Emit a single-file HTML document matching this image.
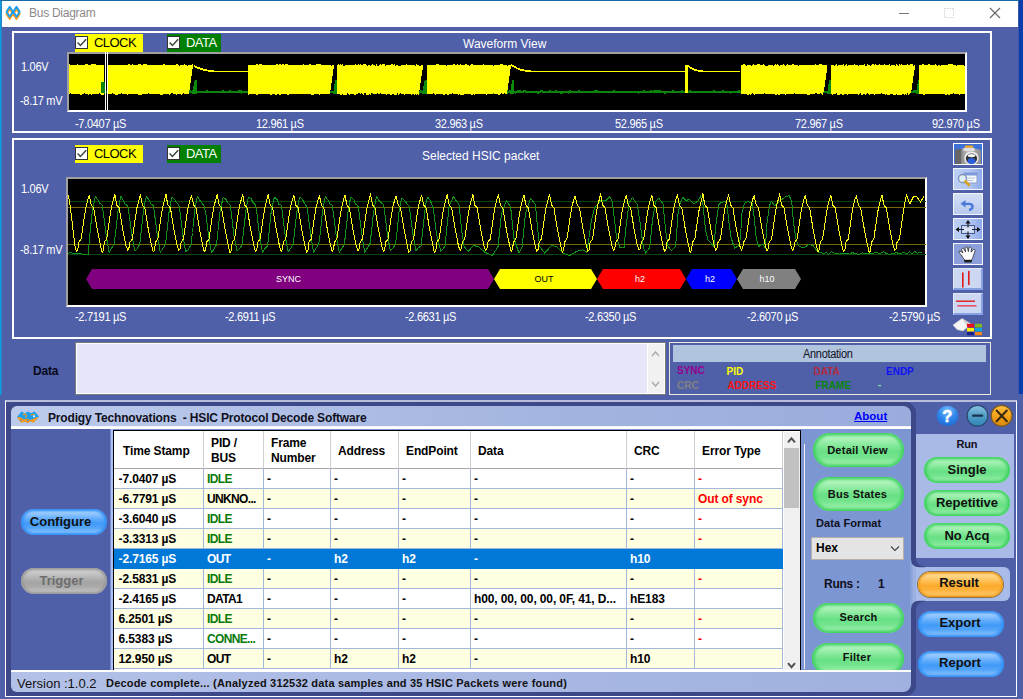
<!DOCTYPE html>
<html>
<head>
<meta charset="utf-8">
<title>Bus Diagram</title>
<style>
*{box-sizing:border-box;margin:0;padding:0}
html,body{width:1023px;height:699px;overflow:hidden}
body{background:#5060a8;font-family:"Liberation Sans",Arial,sans-serif;font-size:12px;color:#fff;position:relative}
.abs{position:absolute}
#win{position:absolute;left:0;top:0;width:1023px;height:395px;background:linear-gradient(to right,#0a9fe0 0,#0a9fe0 1px,#2c80c6 1px,#2c80c6 2px,transparent 2px) no-repeat}
#wtop{position:absolute;left:0;top:0;width:1019px;height:1px;background:#1a6aa6}
#wright{position:absolute;left:1018px;top:0;width:5px;height:394px;background:linear-gradient(to right,#3a58a8 0,#3a58a8 1px,#0b3eaa 1px)}
#titlebar{position:absolute;left:2px;top:1px;width:1016px;height:26px;background:#fff}
#titlebar .t{position:absolute;left:27px;top:5px;font-size:12px;color:#8c8888;letter-spacing:-0.27px}
.panel{position:absolute;border:2px solid #fff;background:#5060a8}
.plot{position:absolute;background:#000;border:1px solid #a0a0a0;border-right-color:#fff;border-bottom-color:#fff}
.chk{position:absolute;height:18px;font-size:13px;line-height:18px;color:#000;letter-spacing:-0.55px}
.chk .box{position:absolute;left:0px;top:2px;width:13px;height:13px;background:#fff;border:1px solid #333}
.chk .lbl{position:absolute;left:19px;top:0}
.lab{position:absolute;font-size:12px;color:#fff;white-space:nowrap;line-height:14px;letter-spacing:-0.33px;transform:scaleX(0.917);transform-origin:0 0}
.tb{position:absolute;left:953px;width:30px;height:22px;background:linear-gradient(to right,#bccff5 0%,#adc3f1 60%,#8eaaea 100%);}
.tb svg{display:block;margin-top:.5px}

.th{position:absolute;top:0;height:38px;background:#fff;border-right:1px solid #d0d0d0;border-bottom:1px solid #a8a8a8;color:#000;font-weight:bold;font-size:12px;padding-left:7px;white-space:nowrap;letter-spacing:-0.12px}
.tr{position:absolute;left:0;width:669px;height:20px}
.td{position:absolute;top:0;height:20px;border-right:1px solid #a3b7da;border-bottom:1px solid #a3b7da;font-weight:bold;font-size:12px;line-height:21px;padding-left:3px;white-space:nowrap;overflow:hidden;letter-spacing:-0.12px}
.pill{position:absolute;border-radius:17px;text-align:center;font-weight:bold;color:#101010;white-space:nowrap;display:flex;align-items:center;justify-content:center}
.pill.green{background:linear-gradient(#a6f0b2 0%,#b6f5c0 12%,#82e898 38%,#68e085 55%,#74e48e 72%,#a0f0ae 92%,#8eeaa0 100%);box-shadow:inset 0 0 3px 2.5px #40d262}
.pill.blue{background:linear-gradient(#7fbcff 0%,#a4d0ff 12%,#5fabfc 38%,#419bf8 55%,#52a4fa 72%,#8cc4ff 92%,#6cb2fc 100%);box-shadow:inset 0 0 2.5px 2px #2f8ef6}
.pill.orange{background:linear-gradient(#ffcf7a 0%,#ffd98e 12%,#ffbe52 38%,#fbab2c 55%,#fcb23c 72%,#ffc868 92%,#f8b448 100%);box-shadow:inset 0 0 2px 1.5px #f09a1c,0 0 0 1px #8a744a}
.pill.gray{background:linear-gradient(#c0c0c0 0%,#d0d0d0 12%,#b4b4b4 38%,#a4a4a4 55%,#aaaaaa 72%,#c4c4c4 92%,#b4b4b4 100%);box-shadow:inset 0 0 2.5px 2px #9a9a9a}
.ann{position:absolute;font-size:10px;font-weight:bold;line-height:12px;white-space:nowrap}
</style>
</head>
<body>
<div id="win"></div><div id="wright"></div><div id="wtop"></div>
<div id="titlebar">
  <svg class="abs" style="left:2px;top:3px" width="20" height="18" viewBox="0 0 20 18">
    <path d="M2.5 9.9 L5.7 4.9 L8.9 9.9 L5.7 14.9 Z M9.3 9.9 L12.5 4.9 L15.7 9.9 L12.5 14.9 Z" fill="none" stroke="#ff9a1a" stroke-width="1.9" stroke-linejoin="round"/>
    <path d="M2.5 7.7 L5.7 2.7 L8.9 7.7 L5.7 12.7 Z M9.3 7.7 L12.5 2.7 L15.7 7.7 L12.5 12.7 Z" fill="none" stroke="#1a9ff0" stroke-width="1.9" stroke-linejoin="round"/>
  </svg>
  <div class="t">Bus Diagram</div>
  <svg class="abs" style="left:880px;top:0" width="140" height="26" viewBox="0 0 140 26">
    <path d="M17 12.5 H27" stroke="#777" stroke-width="1"/>
    <rect x="62.5" y="7.5" width="9" height="9" fill="none" stroke="#d4d4d4" stroke-width="1" stroke-dasharray="1.5 1"/>
    <path d="M108 7 L118 17 M118 7 L108 17" stroke="#666" stroke-width="1.1"/>
  </svg>
</div>

<!-- Panel 1 : Waveform view -->
<div class="panel" style="left:12px;top:31px;width:980px;height:102px"></div>
<div class="chk" style="left:75px;top:34px;width:68px;background:#ffff00"><span class="box"></span><svg class="abs" style="left:1px;top:3px" width="12" height="11"><path d="M1.6 5.5 L4.4 8.4 L10.2 2.2" stroke="#3a4a3a" stroke-width="1.5" fill="none"/></svg><span class="lbl">CLOCK</span></div>
<div class="chk" style="left:167px;top:34px;width:54px;background:#008000;color:#fff"><span class="box"></span><svg class="abs" style="left:1px;top:3px" width="12" height="11"><path d="M1.6 5.5 L4.4 8.4 L10.2 2.2" stroke="#3a4a3a" stroke-width="1.5" fill="none"/></svg><span class="lbl">DATA</span></div>
<div class="lab" style="left:463px;top:37px;font-size:12px;letter-spacing:0;transform:none">Waveform View</div>
<div class="plot" style="left:67px;top:52px;width:900px;height:60px;border-width:2px;border-color:#a0a0a0 #fff #fff #a0a0a0">
<svg class="abs" style="left:0;top:0;overflow:visible" width="896" height="56" viewBox="0 0 896 56" shape-rendering="crispEdges">
<path d="M3.0 38.0 L4.0 38.0 L5.0 38.0 L6.0 37.6 L7.0 38.0 L8.0 38.0 L9.0 37.2 L10.0 38.4 L11.0 38.0 L12.0 38.0 L13.0 38.4 L14.0 38.0 L15.0 38.4 L16.0 38.0 L17.0 38.0 L18.0 38.0 L19.0 38.0 L20.0 38.0 L21.0 38.0 L22.0 38.0 L23.0 38.0 L24.0 38.4 L25.0 38.0 L26.0 38.0 L27.0 37.2 L28.0 38.4 L29.0 38.0 L30.0 38.0 L31.0 37.6 L32.0 37.6 L33.0 38.4 L34.0 38.0 L35.0 38.4 L36.0 38.4 L37.0 38.0 L38.0 38.0 L39.0 38.0 L40.0 38.0 L41.0 38.4 L42.0 37.2 L43.0 38.0 L44.0 38.0 L45.0 38.0 L46.0 38.0 L47.0 38.4 L48.0 38.0 L49.0 38.4 L50.0 38.0 L51.0 38.4 L52.0 37.2 L53.0 37.6 L54.0 38.0 L55.0 38.0 L56.0 38.4 L57.0 38.4 L58.0 37.6 L59.0 38.0 L60.0 38.0 L61.0 38.0 L62.0 38.4 L63.0 37.6 L64.0 38.0 L65.0 38.4 L66.0 38.0 L67.0 38.4 L68.0 38.0 L69.0 38.0 L70.0 37.6 L71.0 38.4 L72.0 38.0 L73.0 37.2 L74.0 38.0 L75.0 38.0 L76.0 38.4 L77.0 38.0 L78.0 38.0 L79.0 38.0 L80.0 38.0 L81.0 37.2 L82.0 38.0 L83.0 37.6 L84.0 37.2 L85.0 38.0 L86.0 38.0 L87.0 38.4 L88.0 38.0 L89.0 38.4 L90.0 38.0 L91.0 38.0 L92.0 37.6 L93.0 38.0 L94.0 38.0 L95.0 38.4 L96.0 38.0 L97.0 38.0 L98.0 38.4 L99.0 38.0 L100.0 38.0 L101.0 37.2 L102.0 38.0 L103.0 38.0 L104.0 38.0 L105.0 38.0 L106.0 38.0 L107.0 37.6 L108.0 38.0 L109.0 37.2 L110.0 38.4 L111.0 38.4 L112.0 37.2 L113.0 37.2 L114.0 38.0 L115.0 38.0 L116.0 37.6 L117.0 38.0 L118.0 38.4 L119.0 38.0 L120.0 38.4 L121.0 37.2 L122.0 38.0 L123.0 38.0 L124.0 37.2 L125.0 38.0 L126.0 38.0 L127.0 38.0 L128.0 37.6 L129.0 37.6 L130.0 38.0 L131.0 38.0 L132.0 37.6 L133.0 37.6 L134.0 38.0 L135.0 37.6 L136.0 38.4 L137.0 37.6 L138.0 37.2 L139.0 38.0 L140.0 38.0 L141.0 37.6 L142.0 38.0 L143.0 37.6 L144.0 38.0 L145.0 38.0 L146.0 38.0 L147.0 38.0 L148.0 38.0 L149.0 38.4 L150.0 38.0 L151.0 38.0 L152.0 38.0 L153.0 38.0 L154.0 37.2 L155.0 38.0 L156.0 38.0 L157.0 37.6 L158.0 38.0 L159.0 38.0 L160.0 38.0 L161.0 37.2 L162.0 38.0 L163.0 38.0 L164.0 38.0 L165.0 38.0 L166.0 38.0 L167.0 38.4 L168.0 38.0 L169.0 38.0 L170.0 37.2 L171.0 38.0 L172.0 37.2 L173.0 38.4 L174.0 38.0 L175.0 37.6 L176.0 38.0 L177.0 38.0 L178.0 37.6 L179.0 38.0 L180.0 38.0 L181.0 38.0 L182.0 38.0 L183.0 38.0 L184.0 38.0 L185.0 38.0 L186.0 37.6 L187.0 38.0 L188.0 38.0 L189.0 38.0 L190.0 37.2 L191.0 38.4 L192.0 38.0 L193.0 38.0 L194.0 38.0 L195.0 38.0 L196.0 38.0 L197.0 38.0 L198.0 38.4 L199.0 38.0 L200.0 38.4 L201.0 38.4 L202.0 38.0 L203.0 38.0 L204.0 37.6 L205.0 37.2 L206.0 38.4 L207.0 38.4 L208.0 37.6 L209.0 37.6 L210.0 37.6 L211.0 38.0 L212.0 38.0 L213.0 37.2 L214.0 37.2 L215.0 37.2 L216.0 37.6 L217.0 37.2 L218.0 38.4 L219.0 38.0 L220.0 38.0 L221.0 38.0 L222.0 38.0 L223.0 38.0 L224.0 38.0 L225.0 37.6 L226.0 38.0 L227.0 38.0 L228.0 38.0 L229.0 38.0 L230.0 38.0 L231.0 38.0 L232.0 38.0 L233.0 38.0 L234.0 38.0 L235.0 38.4 L236.0 38.0 L237.0 38.0 L238.0 38.0 L239.0 38.4 L240.0 38.0 L241.0 38.4 L242.0 38.0 L243.0 38.0 L244.0 38.4 L245.0 38.0 L246.0 38.0 L247.0 37.2 L248.0 38.0 L249.0 38.4 L250.0 38.0 L251.0 38.0 L252.0 37.6 L253.0 38.0 L254.0 38.0 L255.0 38.4 L256.0 38.0 L257.0 38.0 L258.0 38.0 L259.0 38.0 L260.0 37.2 L261.0 38.0 L262.0 38.0 L263.0 38.0 L264.0 38.0 L265.0 38.0 L266.0 38.0 L267.0 38.0 L268.0 38.0 L269.0 37.6 L270.0 38.0 L271.0 37.6 L272.0 38.0 L273.0 38.0 L274.0 37.2 L275.0 37.6 L276.0 38.0 L277.0 38.4 L278.0 38.0 L279.0 38.0 L280.0 38.4 L281.0 38.0 L282.0 38.0 L283.0 37.6 L284.0 38.4 L285.0 38.0 L286.0 37.2 L287.0 38.4 L288.0 38.0 L289.0 37.6 L290.0 37.2 L291.0 38.0 L292.0 37.6 L293.0 37.2 L294.0 38.0 L295.0 38.4 L296.0 38.0 L297.0 38.0 L298.0 38.0 L299.0 37.2 L300.0 38.0 L301.0 38.4 L302.0 38.4 L303.0 37.2 L304.0 38.4 L305.0 38.0 L306.0 37.6 L307.0 38.0 L308.0 38.4 L309.0 37.2 L310.0 37.2 L311.0 37.2 L312.0 37.2 L313.0 38.0 L314.0 37.2 L315.0 38.0 L316.0 37.2 L317.0 38.0 L318.0 37.6 L319.0 37.2 L320.0 38.0 L321.0 38.0 L322.0 38.4 L323.0 38.0 L324.0 38.0 L325.0 37.6 L326.0 38.0 L327.0 38.0 L328.0 37.2 L329.0 38.0 L330.0 38.0 L331.0 38.0 L332.0 38.0 L333.0 37.6 L334.0 38.4 L335.0 38.0 L336.0 38.0 L337.0 37.2 L338.0 37.6 L339.0 38.0 L340.0 38.0 L341.0 38.0 L342.0 38.0 L343.0 38.0 L344.0 38.0 L345.0 38.0 L346.0 38.0 L347.0 38.0 L348.0 38.0 L349.0 38.0 L350.0 38.4 L351.0 38.4 L352.0 37.2 L353.0 38.0 L354.0 38.0 L355.0 37.6 L356.0 38.0 L357.0 37.2 L358.0 37.6 L359.0 38.0 L360.0 37.2 L361.0 37.6 L362.0 38.0 L363.0 38.0 L364.0 37.2 L365.0 37.6 L366.0 37.2 L367.0 38.0 L368.0 38.0 L369.0 38.0 L370.0 38.0 L371.0 37.2 L372.0 37.6 L373.0 38.0 L374.0 38.0 L375.0 37.2 L376.0 37.6 L377.0 38.0 L378.0 38.0 L379.0 38.0 L380.0 37.6 L381.0 38.0 L382.0 37.6 L383.0 38.0 L384.0 38.0 L385.0 38.0 L386.0 38.0 L387.0 38.0 L388.0 38.4 L389.0 38.0 L390.0 37.2 L391.0 37.6 L392.0 38.0 L393.0 38.4 L394.0 37.2 L395.0 38.4 L396.0 38.0 L397.0 37.6 L398.0 38.0 L399.0 38.0 L400.0 38.4 L401.0 38.4 L402.0 38.0 L403.0 38.0 L404.0 38.0 L405.0 37.2 L406.0 37.6 L407.0 37.6 L408.0 38.0 L409.0 38.4 L410.0 37.6 L411.0 38.0 L412.0 38.0 L413.0 37.2 L414.0 38.0 L415.0 37.2 L416.0 37.2 L417.0 38.0 L418.0 38.0 L419.0 38.0 L420.0 38.0 L421.0 38.0 L422.0 38.4 L423.0 38.0 L424.0 37.2 L425.0 38.4 L426.0 38.0 L427.0 38.0 L428.0 38.4 L429.0 38.0 L430.0 37.2 L431.0 38.0 L432.0 38.0 L433.0 37.6 L434.0 38.0 L435.0 38.0 L436.0 37.6 L437.0 38.4 L438.0 37.2 L439.0 38.4 L440.0 38.0 L441.0 37.2 L442.0 38.4 L443.0 38.0 L444.0 38.4 L445.0 38.0 L446.0 38.4 L447.0 38.4 L448.0 38.0 L449.0 37.2 L450.0 38.0 L451.0 37.2 L452.0 38.0 L453.0 38.4 L454.0 38.0 L455.0 37.2 L456.0 37.2 L457.0 38.0 L458.0 38.0 L459.0 38.0 L460.0 38.0 L461.0 38.4 L462.0 37.6 L463.0 38.0 L464.0 38.4 L465.0 38.0 L466.0 38.0 L467.0 37.6 L468.0 38.4 L469.0 38.4 L470.0 38.4 L471.0 38.0 L472.0 37.2 L473.0 37.2 L474.0 38.0 L475.0 38.4 L476.0 38.0 L477.0 38.0 L478.0 38.0 L479.0 38.0 L480.0 38.0 L481.0 37.2 L482.0 38.0 L483.0 38.4 L484.0 38.0 L485.0 38.4 L486.0 38.0 L487.0 37.2 L488.0 38.0 L489.0 38.0 L490.0 38.0 L491.0 38.4 L492.0 38.4 L493.0 38.4 L494.0 38.4 L495.0 38.0 L496.0 37.6 L497.0 38.0 L498.0 38.0 L499.0 38.4 L500.0 38.4 L501.0 37.2 L502.0 38.0 L503.0 38.4 L504.0 38.0 L505.0 37.6 L506.0 38.4 L507.0 38.0 L508.0 38.4 L509.0 38.0 L510.0 37.2 L511.0 38.0 L512.0 38.0 L513.0 38.0 L514.0 38.0 L515.0 38.0 L516.0 38.0 L517.0 38.0 L518.0 38.0 L519.0 37.6 L520.0 38.0 L521.0 38.0 L522.0 38.0 L523.0 38.0 L524.0 37.6 L525.0 38.0 L526.0 37.2 L527.0 38.0 L528.0 37.2 L529.0 38.0 L530.0 37.6 L531.0 37.6 L532.0 37.6 L533.0 38.0 L534.0 38.0 L535.0 38.0 L536.0 38.0 L537.0 38.0 L538.0 38.0 L539.0 37.6 L540.0 38.0 L541.0 38.0 L542.0 38.0 L543.0 38.0 L544.0 37.6 L545.0 37.2 L546.0 38.0 L547.0 38.0 L548.0 37.6 L549.0 38.0 L550.0 38.4 L551.0 38.0 L552.0 38.0 L553.0 38.0 L554.0 38.0 L555.0 38.0 L556.0 38.0 L557.0 38.0 L558.0 37.6 L559.0 38.0 L560.0 38.0 L561.0 38.0 L562.0 38.4 L563.0 38.0 L564.0 38.0 L565.0 37.6 L566.0 38.0 L567.0 38.0 L568.0 38.0 L569.0 38.4 L570.0 38.4 L571.0 38.0 L572.0 38.4 L573.0 38.0 L574.0 38.0 L575.0 37.2 L576.0 38.0 L577.0 38.0 L578.0 38.0 L579.0 38.0 L580.0 38.0 L581.0 38.0 L582.0 37.2 L583.0 38.0 L584.0 38.0 L585.0 37.2 L586.0 38.0 L587.0 37.2 L588.0 38.0 L589.0 37.2 L590.0 37.6 L591.0 37.2 L592.0 38.0 L593.0 38.0 L594.0 38.0 L595.0 38.4 L596.0 38.4 L597.0 38.4 L598.0 38.0 L599.0 37.6 L600.0 38.0 L601.0 38.0 L602.0 38.0 L603.0 38.0 L604.0 37.2 L605.0 37.6 L606.0 38.0 L607.0 38.0 L608.0 38.0 L609.0 38.0 L610.0 38.0 L611.0 37.6 L612.0 38.0 L613.0 37.2 L614.0 38.0 L615.0 38.0 L616.0 38.4 L617.0 37.2 L618.0 38.0 L619.0 38.0 L620.0 38.0 L621.0 37.2 L622.0 38.0 L623.0 38.0 L624.0 38.0 L625.0 38.0 L626.0 38.4 L627.0 38.0 L628.0 38.0 L629.0 38.4 L630.0 38.0 L631.0 38.0 L632.0 38.4 L633.0 37.6 L634.0 38.0 L635.0 38.0 L636.0 38.0 L637.0 38.0 L638.0 38.0 L639.0 38.0 L640.0 38.0 L641.0 38.0 L642.0 37.6 L643.0 38.0 L644.0 38.4 L645.0 37.2 L646.0 38.0 L647.0 38.0 L648.0 38.0 L649.0 38.4 L650.0 37.6 L651.0 38.0 L652.0 38.0 L653.0 38.0 L654.0 37.2 L655.0 38.0 L656.0 38.0 L657.0 38.0 L658.0 38.0 L659.0 38.0 L660.0 37.6 L661.0 38.4 L662.0 38.4 L663.0 38.0 L664.0 38.4 L665.0 38.0 L666.0 38.0 L667.0 38.0 L668.0 38.0 L669.0 37.6 L670.0 37.2 L671.0 37.6 L672.0 38.0 L673.0 37.6 L674.0 38.0 L675.0 38.4 L676.0 37.2 L677.0 38.0 L678.0 38.4 L679.0 38.0 L680.0 37.6 L681.0 38.0 L682.0 38.0 L683.0 38.0 L684.0 38.0 L685.0 37.2 L686.0 37.6 L687.0 37.6 L688.0 37.6 L689.0 38.0 L690.0 38.0 L691.0 38.0 L692.0 38.0 L693.0 37.2 L694.0 38.0 L695.0 38.0 L696.0 38.0 L697.0 37.6 L698.0 37.6 L699.0 38.0 L700.0 38.0 L701.0 38.0 L702.0 38.0 L703.0 38.0 L704.0 37.6 L705.0 37.2 L706.0 38.0 L707.0 37.2 L708.0 38.4 L709.0 37.6 L710.0 38.0 L711.0 38.4 L712.0 38.0 L713.0 37.6 L714.0 38.0 L715.0 38.0 L716.0 38.0 L717.0 38.0 L718.0 38.0 L719.0 38.0 L720.0 38.0 L721.0 38.0 L722.0 38.0 L723.0 38.0 L724.0 38.0 L725.0 38.4 L726.0 38.0 L727.0 38.0 L728.0 38.0 L729.0 38.0 L730.0 38.0 L731.0 38.0 L732.0 38.0 L733.0 38.0 L734.0 38.0 L735.0 38.0 L736.0 38.0 L737.0 38.0 L738.0 38.0 L739.0 38.4 L740.0 37.6 L741.0 38.0 L742.0 38.0 L743.0 38.4 L744.0 37.2 L745.0 38.0 L746.0 38.0 L747.0 38.0 L748.0 37.2 L749.0 38.0 L750.0 38.0 L751.0 38.0 L752.0 38.4 L753.0 38.0 L754.0 38.0 L755.0 38.0 L756.0 38.0 L757.0 38.0 L758.0 37.6 L759.0 38.0 L760.0 38.0 L761.0 38.4 L762.0 38.4 L763.0 37.2 L764.0 37.2 L765.0 38.0 L766.0 37.6 L767.0 37.6 L768.0 37.2 L769.0 38.4 L770.0 38.0 L771.0 37.2 L772.0 38.0 L773.0 37.6 L774.0 38.0 L775.0 38.0 L776.0 38.0 L777.0 37.6 L778.0 38.4 L779.0 37.6 L780.0 38.0 L781.0 38.0 L782.0 37.2 L783.0 37.2 L784.0 37.6 L785.0 38.4 L786.0 37.6 L787.0 38.0 L788.0 37.6 L789.0 37.6 L790.0 37.2 L791.0 38.4 L792.0 38.0 L793.0 38.4 L794.0 37.2 L795.0 38.4 L796.0 38.4 L797.0 37.2 L798.0 37.2 L799.0 37.2 L800.0 38.0 L801.0 37.2 L802.0 37.6 L803.0 38.4 L804.0 37.2 L805.0 37.6 L806.0 37.6 L807.0 37.6 L808.0 37.6 L809.0 38.0 L810.0 38.0 L811.0 38.0 L812.0 38.0 L813.0 38.0 L814.0 37.6 L815.0 38.0 L816.0 38.0 L817.0 38.0 L818.0 37.2 L819.0 38.0 L820.0 38.4 L821.0 38.0 L822.0 37.6 L823.0 38.0 L824.0 37.6 L825.0 38.4 L826.0 37.6 L827.0 38.0 L828.0 38.0 L829.0 38.0 L830.0 38.0 L831.0 38.0 L832.0 37.2 L833.0 38.0 L834.0 37.6 L835.0 38.4 L836.0 38.4 L837.0 38.0 L838.0 37.6 L839.0 38.4 L840.0 38.0 L841.0 37.6 L842.0 37.6 L843.0 38.0 L844.0 38.0 L845.0 37.2 L846.0 38.0 L847.0 37.2 L848.0 38.0 L849.0 38.0 L850.0 37.6 L851.0 37.2 L852.0 38.0 L853.0 38.0 L854.0 37.6 L855.0 37.6 L856.0 38.0 L857.0 38.0 L858.0 37.2 L859.0 38.0 L860.0 38.0 L861.0 38.0 L862.0 37.6 L863.0 38.0 L864.0 37.2 L865.0 38.0 L866.0 38.4 L867.0 37.6 L868.0 37.6 L869.0 38.0 L870.0 38.0 L871.0 38.4 L872.0 38.0 L873.0 38.0 L874.0 38.0 L875.0 37.6 L876.0 37.6 L877.0 37.6 L878.0 38.0 L879.0 38.4 L880.0 38.4 L881.0 38.0 L882.0 38.0 L883.0 38.0 L884.0 38.0 L885.0 38.0 L886.0 38.0 L887.0 37.6 L888.0 38.0 L889.0 37.6 L890.0 38.0 L891.0 37.6 L892.0 38.0 L893.0 38.0 L894.0 37.6 L895.0 38.4 L896.0 38.0" stroke="#0a840a" stroke-width="2.2" fill="none"/>
<path d="M123.0 40.0 L125.8 26.0 L128.0 26.0 L128.0 40.0 Z" fill="#0c8a0c"/>
<path d="M264.0 40.0 L266.2 26.0 L268.0 26.0 L268.0 40.0 Z" fill="#0c8a0c"/>
<path d="M353.0 40.0 L355.8 26.0 L358.0 26.0 L358.0 40.0 Z" fill="#0c8a0c"/>
<path d="M441.0 40.0 L443.2 26.0 L445.0 26.0 L445.0 40.0 Z" fill="#0c8a0c"/>
<path d="M758.0 40.0 L760.2 26.0 L762.0 26.0 L762.0 40.0 Z" fill="#0c8a0c"/>
<path d="M847.0 40.0 L849.2 26.0 L851.0 26.0 L851.0 40.0 Z" fill="#0c8a0c"/>
<path d="M0.0 10.4 L1.0 10.4 L2.0 11.0 L3.0 11.0 L4.0 11.0 L5.0 11.0 L6.0 10.4 L7.0 11.8 L8.0 10.4 L9.0 10.4 L10.0 11.0 L11.0 11.5 L12.0 11.0 L13.0 11.5 L14.0 11.0 L15.0 11.5 L16.0 9.8 L17.0 11.0 L18.0 9.8 L19.0 11.0 L20.0 10.4 L21.0 11.0 L22.0 11.0 L23.0 9.8 L24.0 10.4 L25.0 9.8 L26.0 10.4 L27.0 10.4 L28.0 11.0 L29.0 11.0 L30.0 11.0 L31.0 11.0 L32.0 10.4 L33.0 11.0 L34.0 11.0 L35.0 11.0 L35.0 40.0 L34.0 41.2 L33.0 41.2 L32.0 40.0 L31.0 39.2 L30.0 39.2 L29.0 40.0 L28.0 39.2 L27.0 40.0 L26.0 40.0 L25.0 40.0 L24.0 40.0 L23.0 40.6 L22.0 40.6 L21.0 40.0 L20.0 40.6 L19.0 40.6 L18.0 40.0 L17.0 40.0 L16.0 39.5 L15.0 39.2 L14.0 40.0 L13.0 40.0 L12.0 41.2 L11.0 40.0 L10.0 40.0 L9.0 40.0 L8.0 40.0 L7.0 39.5 L6.0 40.0 L5.0 40.0 L4.0 40.6 L3.0 40.0 L2.0 39.5 L1.0 39.2 L0.0 40.6 Z" fill="#ffff00"/>
<path d="M39.0 11.0 L40.0 10.4 L41.0 11.8 L42.0 11.0 L43.0 10.4 L44.0 11.0 L45.0 11.0 L46.0 11.0 L47.0 11.8 L48.0 11.0 L49.0 11.0 L50.0 11.0 L51.0 11.5 L52.0 11.0 L53.0 11.0 L54.0 10.4 L55.0 11.8 L56.0 9.8 L57.0 11.5 L58.0 11.0 L59.0 11.0 L60.0 9.8 L61.0 10.4 L62.0 11.8 L63.0 9.8 L64.0 11.0 L65.0 11.0 L66.0 11.0 L67.0 10.4 L68.0 11.0 L69.0 11.0 L70.0 9.8 L71.0 9.8 L72.0 10.4 L73.0 11.0 L74.0 10.4 L75.0 9.8 L76.0 11.0 L77.0 9.8 L78.0 11.0 L79.0 11.5 L80.0 10.4 L81.0 11.0 L82.0 11.0 L83.0 10.4 L84.0 11.0 L85.0 11.0 L86.0 11.0 L87.0 11.0 L88.0 11.0 L89.0 11.0 L90.0 11.0 L91.0 11.5 L92.0 11.0 L93.0 11.8 L94.0 10.4 L95.0 9.8 L96.0 11.0 L97.0 11.0 L98.0 11.8 L99.0 10.4 L100.0 11.5 L101.0 11.0 L102.0 11.5 L103.0 9.8 L104.0 11.8 L105.0 11.0 L106.0 11.0 L107.0 10.4 L108.0 9.8 L109.0 10.4 L110.0 11.8 L111.0 11.8 L112.0 11.0 L113.0 10.4 L114.0 11.8 L115.0 10.4 L116.0 10.4 L117.0 11.0 L118.0 11.8 L119.0 11.8 L120.0 10.4 L121.0 11.8 L122.0 11.0 L123.0 11.0 L124.0 9.8 L124.0 12.0 L123.0 19.0 L122.0 26.0 L121.0 33.0 L120.0 40.0 L119.0 40.6 L118.0 39.5 L117.0 40.6 L116.0 40.0 L115.0 39.5 L114.0 39.2 L113.0 41.2 L112.0 40.0 L111.0 40.0 L110.0 39.2 L109.0 40.0 L108.0 40.6 L107.0 40.6 L106.0 40.0 L105.0 40.0 L104.0 39.2 L103.0 39.2 L102.0 39.5 L101.0 41.2 L100.0 40.0 L99.0 40.0 L98.0 40.0 L97.0 40.0 L96.0 40.6 L95.0 39.5 L94.0 40.6 L93.0 40.6 L92.0 41.2 L91.0 40.0 L90.0 39.2 L89.0 40.0 L88.0 40.0 L87.0 39.5 L86.0 40.0 L85.0 40.0 L84.0 39.5 L83.0 40.6 L82.0 39.2 L81.0 40.6 L80.0 39.5 L79.0 39.2 L78.0 40.0 L77.0 40.0 L76.0 40.0 L75.0 40.6 L74.0 39.5 L73.0 40.0 L72.0 41.2 L71.0 40.0 L70.0 41.2 L69.0 40.0 L68.0 40.0 L67.0 40.6 L66.0 40.0 L65.0 39.5 L64.0 40.6 L63.0 39.2 L62.0 40.0 L61.0 39.5 L60.0 40.6 L59.0 40.0 L58.0 41.2 L57.0 39.5 L56.0 40.6 L55.0 39.2 L54.0 40.0 L53.0 39.2 L52.0 39.2 L51.0 40.0 L50.0 40.6 L49.0 40.0 L48.0 41.2 L47.0 41.2 L46.0 40.0 L45.0 40.0 L44.0 39.2 L43.0 39.2 L42.0 40.0 L41.0 39.5 L40.0 40.6 L39.0 40.0 Z" fill="#ffff00"/>
<path d="M179.0 11.8 L180.0 9.8 L181.0 11.8 L182.0 10.4 L183.0 11.5 L184.0 11.0 L185.0 11.8 L186.0 11.0 L187.0 11.0 L188.0 9.8 L189.0 11.0 L190.0 11.0 L191.0 9.8 L192.0 9.8 L193.0 11.0 L194.0 11.0 L195.0 11.5 L196.0 11.0 L197.0 11.0 L198.0 11.8 L199.0 11.0 L200.0 11.5 L201.0 10.4 L202.0 11.0 L203.0 11.8 L204.0 10.4 L205.0 11.0 L206.0 11.0 L207.0 10.4 L208.0 9.8 L209.0 11.0 L210.0 11.0 L211.0 9.8 L212.0 10.4 L213.0 11.0 L214.0 9.8 L215.0 11.0 L216.0 10.4 L217.0 9.8 L218.0 9.8 L219.0 11.0 L220.0 10.4 L221.0 11.0 L222.0 11.0 L223.0 11.8 L224.0 11.0 L225.0 10.4 L226.0 11.0 L227.0 11.8 L228.0 11.0 L229.0 11.0 L230.0 11.8 L231.0 11.0 L232.0 10.4 L233.0 11.0 L234.0 10.4 L235.0 9.8 L236.0 11.5 L237.0 10.4 L238.0 11.0 L239.0 11.5 L240.0 10.4 L241.0 9.8 L242.0 11.0 L243.0 10.4 L244.0 11.0 L245.0 11.0 L246.0 11.0 L247.0 11.0 L248.0 9.8 L249.0 9.8 L250.0 11.0 L251.0 9.8 L252.0 10.4 L253.0 11.0 L254.0 10.4 L255.0 11.0 L256.0 11.0 L257.0 11.0 L258.0 10.4 L259.0 11.5 L260.0 11.0 L261.0 11.0 L262.0 11.8 L263.0 11.8 L264.0 10.4 L265.0 11.0 L265.0 12.0 L264.0 19.0 L263.0 26.0 L262.0 33.0 L261.0 39.2 L260.0 40.6 L259.0 39.2 L258.0 40.0 L257.0 40.0 L256.0 40.0 L255.0 40.0 L254.0 40.0 L253.0 40.0 L252.0 39.2 L251.0 41.2 L250.0 40.0 L249.0 40.6 L248.0 39.5 L247.0 40.0 L246.0 40.0 L245.0 40.0 L244.0 41.2 L243.0 41.2 L242.0 40.6 L241.0 40.0 L240.0 40.0 L239.0 40.0 L238.0 40.0 L237.0 40.0 L236.0 40.0 L235.0 40.0 L234.0 40.6 L233.0 40.0 L232.0 39.5 L231.0 39.5 L230.0 40.0 L229.0 40.0 L228.0 40.6 L227.0 40.0 L226.0 39.2 L225.0 40.0 L224.0 40.0 L223.0 39.5 L222.0 41.2 L221.0 39.2 L220.0 40.0 L219.0 41.2 L218.0 40.6 L217.0 40.0 L216.0 40.0 L215.0 40.0 L214.0 40.6 L213.0 40.0 L212.0 40.0 L211.0 41.2 L210.0 40.6 L209.0 40.0 L208.0 40.0 L207.0 41.2 L206.0 40.0 L205.0 39.5 L204.0 39.5 L203.0 40.0 L202.0 41.2 L201.0 40.0 L200.0 40.0 L199.0 40.0 L198.0 39.5 L197.0 40.0 L196.0 40.6 L195.0 39.5 L194.0 40.0 L193.0 40.0 L192.0 39.2 L191.0 40.6 L190.0 39.5 L189.0 41.2 L188.0 40.0 L187.0 41.2 L186.0 39.5 L185.0 40.0 L184.0 40.0 L183.0 39.2 L182.0 40.0 L181.0 39.2 L180.0 41.2 L179.0 41.2 Z" fill="#ffff00"/>
<path d="M267.5 10.4 L268.5 11.0 L269.5 10.4 L270.5 11.0 L271.5 9.8 L272.5 11.0 L273.5 10.4 L274.5 11.8 L275.5 11.8 L276.5 11.0 L277.5 11.0 L278.5 11.0 L279.5 11.0 L280.5 11.0 L281.5 11.0 L282.5 11.0 L283.5 11.0 L284.5 11.5 L285.5 11.0 L286.5 9.8 L287.5 11.0 L288.5 11.0 L289.5 9.8 L290.5 11.5 L291.5 9.8 L292.5 11.0 L293.5 11.0 L294.5 10.4 L295.5 10.4 L296.5 10.4 L297.5 11.0 L298.5 11.8 L299.5 11.0 L300.5 11.0 L301.5 11.8 L302.5 11.0 L303.5 9.8 L304.5 11.0 L305.5 11.0 L306.5 11.8 L307.5 10.4 L308.5 11.8 L309.5 11.5 L310.5 11.5 L311.5 10.4 L312.5 11.0 L313.5 10.4 L314.5 9.8 L315.5 10.4 L316.5 11.5 L317.5 11.0 L318.5 11.0 L319.5 11.0 L320.5 11.0 L321.5 11.0 L322.5 10.4 L323.5 10.4 L324.5 11.0 L325.5 10.4 L326.5 11.5 L327.5 11.0 L328.5 11.5 L329.5 11.8 L330.5 11.8 L331.5 11.8 L332.5 11.0 L333.5 11.0 L334.5 11.0 L335.5 11.0 L336.5 11.0 L337.5 10.4 L338.5 11.0 L339.5 11.0 L340.5 11.0 L341.5 11.0 L342.5 11.0 L343.5 11.0 L344.5 11.5 L345.5 11.0 L346.5 11.8 L347.5 9.8 L348.5 11.0 L349.5 11.0 L350.5 11.8 L351.5 11.8 L352.5 11.0 L353.5 11.0 L353.5 15.5 L352.5 22.5 L351.5 29.5 L350.5 36.5 L349.5 40.6 L348.5 40.0 L347.5 40.6 L346.5 40.0 L345.5 41.2 L344.5 39.5 L343.5 40.0 L342.5 40.6 L341.5 40.0 L340.5 39.5 L339.5 40.0 L338.5 40.0 L337.5 40.0 L336.5 40.0 L335.5 41.2 L334.5 40.0 L333.5 39.5 L332.5 40.0 L331.5 39.2 L330.5 40.0 L329.5 41.2 L328.5 39.2 L327.5 41.2 L326.5 41.2 L325.5 40.6 L324.5 40.0 L323.5 40.0 L322.5 41.2 L321.5 40.6 L320.5 40.0 L319.5 39.5 L318.5 40.0 L317.5 40.6 L316.5 40.0 L315.5 39.5 L314.5 40.0 L313.5 40.0 L312.5 40.0 L311.5 39.2 L310.5 40.0 L309.5 40.0 L308.5 39.2 L307.5 40.0 L306.5 40.0 L305.5 40.0 L304.5 39.5 L303.5 39.2 L302.5 39.2 L301.5 41.2 L300.5 40.0 L299.5 40.6 L298.5 40.6 L297.5 40.6 L296.5 39.2 L295.5 39.2 L294.5 41.2 L293.5 40.0 L292.5 39.2 L291.5 40.0 L290.5 39.2 L289.5 39.2 L288.5 40.0 L287.5 40.0 L286.5 41.2 L285.5 41.2 L284.5 40.0 L283.5 40.0 L282.5 40.0 L281.5 39.5 L280.5 41.2 L279.5 40.0 L278.5 39.2 L277.5 40.6 L276.5 40.6 L275.5 40.6 L274.5 41.2 L273.5 40.0 L272.5 41.2 L271.5 40.6 L270.5 40.0 L269.5 40.0 L268.5 39.5 L267.5 40.0 Z" fill="#ffff00"/>
<path d="M358.0 11.0 L359.0 11.0 L360.0 11.8 L361.0 11.0 L362.0 11.0 L363.0 11.8 L364.0 10.4 L365.0 11.0 L366.0 11.8 L367.0 11.0 L368.0 9.8 L369.0 9.8 L370.0 11.0 L371.0 11.0 L372.0 11.0 L373.0 11.0 L374.0 11.0 L375.0 11.5 L376.0 9.8 L377.0 11.8 L378.0 11.8 L379.0 10.4 L380.0 11.0 L381.0 11.5 L382.0 11.0 L383.0 11.0 L384.0 10.4 L385.0 10.4 L386.0 10.4 L387.0 11.8 L388.0 9.8 L389.0 11.0 L390.0 11.5 L391.0 9.8 L392.0 10.4 L393.0 11.0 L394.0 11.0 L395.0 11.0 L396.0 11.0 L397.0 9.8 L398.0 11.0 L399.0 10.4 L400.0 11.8 L401.0 11.8 L402.0 9.8 L403.0 10.4 L404.0 10.4 L405.0 11.0 L406.0 11.0 L407.0 11.0 L408.0 11.0 L409.0 11.5 L410.0 10.4 L411.0 11.0 L412.0 11.0 L413.0 11.5 L414.0 9.8 L415.0 10.4 L416.0 11.5 L417.0 11.0 L418.0 11.5 L419.0 11.0 L420.0 11.0 L421.0 11.5 L422.0 11.0 L423.0 10.4 L424.0 11.8 L425.0 11.8 L426.0 11.0 L427.0 11.0 L428.0 11.0 L429.0 11.0 L430.0 11.5 L431.0 10.4 L432.0 9.8 L433.0 9.8 L434.0 11.0 L435.0 11.8 L436.0 11.0 L437.0 10.4 L438.0 11.8 L439.0 11.8 L440.0 11.0 L441.0 11.0 L442.0 10.4 L442.0 12.0 L441.0 19.0 L440.0 26.0 L439.0 33.0 L438.0 40.0 L437.0 39.5 L436.0 39.5 L435.0 39.2 L434.0 41.2 L433.0 39.2 L432.0 39.5 L431.0 40.0 L430.0 41.2 L429.0 40.0 L428.0 40.6 L427.0 39.2 L426.0 40.0 L425.0 39.2 L424.0 39.2 L423.0 40.6 L422.0 40.0 L421.0 40.0 L420.0 40.0 L419.0 40.0 L418.0 40.0 L417.0 41.2 L416.0 39.5 L415.0 40.0 L414.0 39.2 L413.0 40.0 L412.0 40.0 L411.0 40.0 L410.0 39.2 L409.0 40.0 L408.0 40.6 L407.0 39.2 L406.0 40.6 L405.0 40.6 L404.0 40.0 L403.0 41.2 L402.0 40.0 L401.0 40.0 L400.0 39.2 L399.0 40.0 L398.0 40.6 L397.0 39.5 L396.0 40.0 L395.0 40.6 L394.0 41.2 L393.0 40.6 L392.0 41.2 L391.0 40.0 L390.0 40.0 L389.0 41.2 L388.0 39.5 L387.0 40.6 L386.0 40.0 L385.0 40.0 L384.0 39.5 L383.0 39.2 L382.0 40.0 L381.0 40.0 L380.0 40.0 L379.0 41.2 L378.0 40.0 L377.0 40.0 L376.0 40.0 L375.0 41.2 L374.0 40.0 L373.0 40.0 L372.0 40.0 L371.0 40.0 L370.0 40.0 L369.0 39.5 L368.0 39.5 L367.0 40.0 L366.0 41.2 L365.0 39.2 L364.0 39.5 L363.0 40.0 L362.0 39.5 L361.0 40.0 L360.0 39.5 L359.0 39.5 L358.0 40.0 Z" fill="#ffff00"/>
<path d="M672.0 11.0 L673.0 11.0 L674.0 11.0 L675.0 9.8 L676.0 11.0 L677.0 11.5 L678.0 11.8 L679.0 11.0 L680.0 11.8 L681.0 11.0 L682.0 11.5 L683.0 11.5 L684.0 9.8 L685.0 11.0 L686.0 10.4 L687.0 11.5 L688.0 10.4 L689.0 9.8 L690.0 10.4 L691.0 10.4 L692.0 11.0 L693.0 11.5 L694.0 10.4 L695.0 10.4 L696.0 11.5 L697.0 11.8 L698.0 11.8 L699.0 11.8 L700.0 10.4 L701.0 11.0 L702.0 11.0 L703.0 11.0 L704.0 11.8 L705.0 11.5 L706.0 9.8 L707.0 11.0 L708.0 11.0 L709.0 9.8 L710.0 11.8 L711.0 11.5 L712.0 11.0 L713.0 11.5 L714.0 9.8 L715.0 11.0 L716.0 11.8 L717.0 11.5 L718.0 9.8 L719.0 11.0 L720.0 11.0 L721.0 11.0 L722.0 11.8 L723.0 9.8 L724.0 9.8 L725.0 11.0 L726.0 11.0 L727.0 11.8 L728.0 11.0 L729.0 11.5 L730.0 11.8 L731.0 11.0 L732.0 11.5 L733.0 11.0 L734.0 11.0 L735.0 11.5 L736.0 11.0 L737.0 11.0 L738.0 11.0 L739.0 11.0 L740.0 11.0 L741.0 11.0 L742.0 11.0 L743.0 11.8 L744.0 11.0 L745.0 11.5 L746.0 9.8 L747.0 11.0 L748.0 10.4 L749.0 11.5 L750.0 9.8 L751.0 11.0 L752.0 9.8 L753.0 10.4 L754.0 11.8 L755.0 11.0 L756.0 11.0 L757.0 11.0 L758.0 11.0 L758.0 15.5 L757.0 22.5 L756.0 29.5 L755.0 36.5 L754.0 40.0 L753.0 41.2 L752.0 39.2 L751.0 39.5 L750.0 40.0 L749.0 39.5 L748.0 39.5 L747.0 39.2 L746.0 39.2 L745.0 40.0 L744.0 39.2 L743.0 40.0 L742.0 39.2 L741.0 40.6 L740.0 41.2 L739.0 41.2 L738.0 40.6 L737.0 40.0 L736.0 40.0 L735.0 40.0 L734.0 39.5 L733.0 39.5 L732.0 40.6 L731.0 40.0 L730.0 40.6 L729.0 40.0 L728.0 40.0 L727.0 40.0 L726.0 39.5 L725.0 39.2 L724.0 40.0 L723.0 39.2 L722.0 40.0 L721.0 39.2 L720.0 40.6 L719.0 40.0 L718.0 39.2 L717.0 41.2 L716.0 40.0 L715.0 40.0 L714.0 39.2 L713.0 40.6 L712.0 39.2 L711.0 40.0 L710.0 41.2 L709.0 40.0 L708.0 40.0 L707.0 41.2 L706.0 40.0 L705.0 39.5 L704.0 40.6 L703.0 40.0 L702.0 40.6 L701.0 40.0 L700.0 40.0 L699.0 40.6 L698.0 40.0 L697.0 40.6 L696.0 39.2 L695.0 39.2 L694.0 40.0 L693.0 40.6 L692.0 40.0 L691.0 40.0 L690.0 39.5 L689.0 40.0 L688.0 40.6 L687.0 40.0 L686.0 40.0 L685.0 41.2 L684.0 39.2 L683.0 39.2 L682.0 40.6 L681.0 40.6 L680.0 40.0 L679.0 41.2 L678.0 41.2 L677.0 39.2 L676.0 40.0 L675.0 39.2 L674.0 40.0 L673.0 40.0 L672.0 40.6 Z" fill="#ffff00"/>
<path d="M761.5 11.0 L762.5 11.0 L763.5 11.5 L764.5 11.0 L765.5 11.8 L766.5 11.0 L767.5 9.8 L768.5 11.5 L769.5 11.0 L770.5 11.0 L771.5 11.0 L772.5 11.0 L773.5 11.5 L774.5 10.4 L775.5 11.5 L776.5 11.0 L777.5 10.4 L778.5 11.5 L779.5 11.0 L780.5 11.0 L781.5 11.5 L782.5 11.0 L783.5 11.5 L784.5 11.5 L785.5 10.4 L786.5 11.0 L787.5 11.0 L788.5 11.0 L789.5 11.8 L790.5 11.0 L791.5 11.0 L792.5 11.0 L793.5 11.0 L794.5 11.0 L795.5 9.8 L796.5 11.8 L797.5 11.8 L798.5 10.4 L799.5 11.0 L800.5 11.0 L801.5 11.8 L802.5 11.0 L803.5 9.8 L804.5 10.4 L805.5 11.5 L806.5 10.4 L807.5 11.0 L808.5 11.0 L809.5 11.5 L810.5 10.4 L811.5 11.0 L812.5 11.0 L813.5 11.0 L814.5 11.5 L815.5 9.8 L816.5 11.0 L817.5 11.0 L818.5 11.5 L819.5 11.5 L820.5 9.8 L821.5 11.8 L822.5 11.0 L823.5 11.0 L824.5 11.0 L825.5 11.0 L826.5 11.8 L827.5 9.8 L828.5 11.0 L829.5 11.8 L830.5 9.8 L831.5 11.0 L832.5 9.8 L833.5 11.0 L834.5 11.0 L835.5 11.0 L836.5 11.0 L837.5 11.0 L838.5 9.8 L839.5 11.0 L840.5 11.0 L841.5 9.8 L842.5 9.8 L843.5 9.8 L844.5 11.5 L845.5 11.0 L845.5 15.5 L844.5 22.5 L843.5 29.5 L842.5 36.5 L841.5 39.5 L840.5 40.0 L839.5 41.2 L838.5 39.2 L837.5 41.2 L836.5 40.0 L835.5 41.2 L834.5 40.0 L833.5 40.0 L832.5 40.6 L831.5 41.2 L830.5 40.6 L829.5 40.6 L828.5 40.6 L827.5 39.5 L826.5 40.6 L825.5 41.2 L824.5 41.2 L823.5 40.0 L822.5 39.5 L821.5 39.5 L820.5 40.6 L819.5 41.2 L818.5 41.2 L817.5 39.5 L816.5 40.6 L815.5 40.0 L814.5 39.5 L813.5 40.0 L812.5 39.2 L811.5 40.0 L810.5 40.0 L809.5 40.0 L808.5 40.0 L807.5 40.0 L806.5 40.0 L805.5 41.2 L804.5 39.5 L803.5 39.5 L802.5 39.5 L801.5 39.5 L800.5 41.2 L799.5 40.0 L798.5 39.2 L797.5 40.0 L796.5 41.2 L795.5 40.0 L794.5 40.0 L793.5 40.6 L792.5 41.2 L791.5 39.2 L790.5 40.0 L789.5 40.6 L788.5 39.5 L787.5 40.0 L786.5 39.5 L785.5 39.5 L784.5 40.0 L783.5 40.0 L782.5 40.0 L781.5 40.0 L780.5 40.0 L779.5 40.0 L778.5 41.2 L777.5 40.0 L776.5 40.0 L775.5 40.0 L774.5 40.6 L773.5 41.2 L772.5 40.0 L771.5 40.0 L770.5 41.2 L769.5 41.2 L768.5 41.2 L767.5 39.2 L766.5 40.0 L765.5 39.5 L764.5 40.0 L763.5 41.2 L762.5 40.0 L761.5 40.6 Z" fill="#ffff00"/>
<path d="M850.0 11.0 L851.0 11.5 L852.0 11.0 L853.0 11.0 L854.0 9.8 L855.0 11.0 L856.0 11.0 L857.0 10.4 L858.0 11.5 L859.0 10.4 L860.0 9.8 L861.0 9.8 L862.0 11.5 L863.0 10.4 L864.0 11.5 L865.0 11.0 L866.0 11.0 L867.0 9.8 L868.0 11.5 L869.0 11.8 L870.0 10.4 L871.0 11.5 L872.0 11.5 L873.0 11.0 L874.0 11.0 L875.0 11.0 L876.0 11.0 L877.0 11.0 L878.0 11.0 L879.0 11.0 L880.0 9.8 L881.0 9.8 L882.0 9.8 L883.0 9.8 L884.0 11.0 L885.0 11.5 L886.0 11.0 L887.0 11.8 L888.0 11.5 L889.0 11.0 L890.0 11.8 L891.0 10.4 L892.0 11.0 L893.0 11.0 L894.0 11.0 L895.0 11.8 L896.0 11.8 L896.0 41.2 L895.0 39.2 L894.0 40.0 L893.0 40.0 L892.0 40.0 L891.0 40.0 L890.0 41.2 L889.0 39.2 L888.0 41.2 L887.0 39.2 L886.0 40.0 L885.0 39.2 L884.0 39.2 L883.0 40.0 L882.0 40.0 L881.0 40.0 L880.0 41.2 L879.0 40.0 L878.0 40.0 L877.0 41.2 L876.0 40.0 L875.0 39.5 L874.0 40.0 L873.0 40.0 L872.0 40.0 L871.0 40.0 L870.0 39.5 L869.0 40.0 L868.0 40.0 L867.0 40.0 L866.0 40.6 L865.0 39.2 L864.0 41.2 L863.0 39.2 L862.0 40.6 L861.0 39.2 L860.0 41.2 L859.0 39.2 L858.0 40.0 L857.0 40.0 L856.0 40.0 L855.0 41.2 L854.0 40.0 L853.0 39.2 L852.0 40.0 L851.0 40.0 L850.0 40.0 Z" fill="#ffff00"/>
<path d="M125.0 12.0 Q 135.0 17.0 146.0 17.5 L 179.0 17.5" stroke="#ffff00" stroke-width="1.8" fill="none"/>
<path d="M442.0 11.0 L444.0 12.0 Q 451.0 17.0 463.0 17.5 L 616.0 17.5" stroke="#ffff00" stroke-width="1.8" fill="none"/>
<path d="M616.0 39.0 L616.0 11.0 L619.0 11.0 L619.0 39.0 Z" fill="#ffff00"/>
<path d="M619.0 12.0 Q 625.0 17.0 635.0 17.5 L 671.0 17.5" stroke="#ffff00" stroke-width="1.8" fill="none"/>
<rect x="32.0" y="28.0" width="3.5" height="11" fill="#0a840a"/>
<rect x="36" y="-2" width="1" height="60" fill="#fff"/>
<rect x="38" y="-2" width="1" height="60" fill="#fff"/>
</svg>
</div>
<div class="lab" style="left:21px;top:60px">1.06V</div>
<div class="lab" style="left:20px;top:94px">-8.17 mV</div>
<div class="lab" style="left:75px;top:117px">-7.0407 µS</div>
<div class="lab" style="left:256px;top:117px">12.961 µS</div>
<div class="lab" style="left:435px;top:117px">32.963 µS</div>
<div class="lab" style="left:615px;top:117px">52.965 µS</div>
<div class="lab" style="left:795px;top:117px">72.967 µS</div>
<div class="lab" style="left:932px;top:117px">92.970 µS</div>

<!-- Panel 2 : Selected packet -->
<div class="panel" style="left:12px;top:138px;width:980px;height:201px"></div>
<div class="chk" style="left:75px;top:145px;width:68px;background:#ffff00"><span class="box"></span><svg class="abs" style="left:1px;top:3px" width="12" height="11"><path d="M1.6 5.5 L4.4 8.4 L10.2 2.2" stroke="#3a4a3a" stroke-width="1.5" fill="none"/></svg><span class="lbl">CLOCK</span></div>
<div class="chk" style="left:167px;top:145px;width:54px;background:#008000;color:#fff"><span class="box"></span><svg class="abs" style="left:1px;top:3px" width="12" height="11"><path d="M1.6 5.5 L4.4 8.4 L10.2 2.2" stroke="#3a4a3a" stroke-width="1.5" fill="none"/></svg><span class="lbl">DATA</span></div>
<div class="lab" style="left:422px;top:149px;font-size:12px;letter-spacing:0;transform:none">Selected HSIC packet</div>
<div class="plot" style="left:66px;top:177px;width:861px;height:130px;border-width:2px 2px 2px 2px;border-color:#a0a0a0 #fff #fff #a0a0a0">
<svg class="abs" style="left:0;top:0" width="858" height="126" viewBox="0 0 858 126">
<rect x="0" y="22.0" width="858" height="1" fill="#0a480a" shape-rendering="crispEdges"/>
<rect x="0" y="75.0" width="858" height="1" fill="#0a480a" shape-rendering="crispEdges"/>
<rect x="0" y="28.0" width="858" height="1" fill="#6e6a08" shape-rendering="crispEdges"/>
<rect x="0" y="65.0" width="858" height="1" fill="#6e6a08" shape-rendering="crispEdges"/>
<path d="M-1.0 74.6 L3.0 73.5 L7.0 75.0 L12.0 74.0 L16.0 76.0 L20.0 75.8 L22.2 52.4 L24.2 33.1 L26.0 23.9 L27.3 17.9 L29.9 20.7 L31.6 24.2 L34.2 26.0 L35.5 35.0 L38.3 57.3 L41.1 73.6 L43.7 68.8 L46.2 65.6 L47.8 51.6 L49.8 33.7 L51.6 23.4 L52.9 17.0 L55.4 21.8 L57.2 25.0 L59.8 27.0 L61.1 35.3 L63.9 56.2 L66.7 71.9 L69.2 69.8 L71.8 65.0 L73.3 51.8 L75.4 32.4 L77.2 22.0 L78.4 17.9 L81.0 20.6 L82.8 24.8 L85.3 26.7 L86.6 35.3 L89.4 57.0 L92.2 73.4 L94.8 69.6 L97.4 65.5 L98.9 53.6 L100.9 34.1 L102.7 23.7 L104.0 18.5 L106.6 20.3 L108.4 23.4 L110.9 26.2 L112.2 34.1 L115.0 57.6 L117.8 72.8 L120.4 70.5 L122.9 65.8 L124.5 53.5 L126.5 33.8 L128.3 21.9 L129.6 17.4 L132.1 21.6 L133.9 23.9 L136.5 27.8 L137.8 34.8 L140.6 56.1 L143.4 73.3 L145.9 70.3 L148.5 65.5 L150.0 51.6 L152.1 32.6 L153.9 24.0 L155.2 18.6 L157.7 19.9 L159.5 23.4 L162.1 25.8 L163.3 34.0 L166.1 57.7 L169.0 72.3 L171.5 69.8 L174.1 65.9 L175.6 51.8 L177.7 33.5 L179.4 22.2 L180.7 18.3 L183.3 19.9 L185.1 23.8 L187.6 26.1 L188.9 34.5 L191.7 58.0 L194.5 73.7 L197.1 69.3 L199.6 66.8 L201.2 51.9 L203.2 32.8 L205.0 23.8 L206.3 18.3 L208.8 19.8 L210.6 25.1 L213.2 26.1 L214.5 34.5 L217.3 57.6 L220.1 72.6 L222.7 69.3 L225.2 65.1 L226.7 51.6 L228.8 33.2 L230.6 22.4 L231.9 18.2 L234.4 20.4 L236.2 23.9 L238.8 27.7 L240.0 35.0 L242.9 57.2 L245.7 73.8 L248.2 69.0 L250.8 65.2 L252.3 53.4 L254.4 33.7 L256.2 22.4 L257.4 17.3 L260.0 21.2 L261.8 25.0 L264.3 26.0 L265.6 36.0 L268.4 57.8 L271.2 73.2 L273.8 69.5 L276.4 65.1 L277.9 51.5 L279.9 34.0 L281.7 22.4 L283.0 18.5 L285.6 20.2 L287.3 24.7 L289.9 26.9 L291.2 34.5 L294.0 56.3 L296.8 73.5 L299.4 68.8 L301.9 65.4 L303.5 52.6 L305.5 33.8 L307.3 23.3 L308.6 17.5 L311.1 21.6 L312.9 23.3 L315.5 25.6 L316.8 34.5 L319.6 56.9 L322.4 72.0 L324.9 69.0 L327.5 65.7 L329.0 52.7 L331.1 32.2 L332.9 22.7 L334.1 18.9 L336.7 21.8 L338.5 24.3 L341.0 27.1 L342.3 35.2 L345.1 56.2 L347.9 72.0 L350.5 68.6 L353.1 66.9 L354.6 52.9 L356.6 34.0 L358.4 21.9 L359.7 18.3 L362.0 20.9 L365.3 29.2 L368.6 55.8 L372.8 72.5 L377.0 67.5 L378.6 50.9 L381.1 27.6 L385.3 17.6 L391.1 25.9 L393.6 50.9 L396.1 67.5 L400.2 72.5 L405.2 66.6 L410.2 67.5 L416.8 73.3 L424.3 76.6 L430.1 67.5 L433.5 34.2 L438.4 21.8 L442.6 27.6 L445.9 59.2 L450.9 74.1 L454.2 67.5 L457.5 34.2 L462.5 19.3 L467.5 25.9 L469.7 50.9 L471.7 67.5 L476.7 74.1 L483.3 66.6 L488.3 67.5 L494.9 74.1 L501.6 76.6 L508.2 72.5 L514.9 70.8 L519.0 73.3 L523.2 42.5 L526.5 29.2 L530.3 24.3 L533.6 20.9 L537.8 21.8 L541.9 17.6 L544.4 22.6 L548.6 59.2 L551.9 69.1 L556.1 68.3 L557.7 50.9 L561.0 24.3 L564.4 18.4 L569.4 25.9 L571.9 42.5 L575.2 67.5 L577.7 74.1 L581.8 68.3 L584.3 42.5 L587.6 22.6 L591.0 19.3 L595.1 25.1 L597.6 50.9 L600.1 67.5 L603.4 71.6 L607.6 67.5 L610.1 34.2 L612.6 22.6 L615.1 18.4 L618.4 21.8 L620.9 20.1 L625.9 25.1 L630.0 21.8 L632.5 16.8 L635.0 25.9 L637.5 50.9 L640.0 60.8 L645.8 67.5 L648.3 42.5 L650.8 25.9 L653.3 23.4 L657.4 22.6 L659.1 25.9 L660.8 42.5 L663.2 59.2 L666.6 69.1 L670.7 66.6 L672.4 59.2 L674.0 34.2 L676.5 24.3 L679.9 22.6 L684.0 24.3 L685.7 34.2 L688.2 59.2 L690.4 66.9 L690.7 67.5 L694.7 65.1 L697.3 69.4 L699.0 43.8 L701.5 26.7 L703.3 22.4 L706.7 26.7 L712.7 21.5 L716.9 18.1 L721.2 16.4 L723.8 23.2 L725.5 43.8 L728.1 60.9 L731.5 67.7 L736.6 68.6 L740.9 65.1 L745.2 66.9 L750.3 73.7 L753.0 73.8 L755.6 74.6 L758.2 73.4 L760.8 75.4 L763.4 72.6 L766.0 74.0 L768.6 74.6 L771.2 75.1 L773.8 74.6 L776.4 74.5 L779.0 74.8 L781.6 75.1 L784.2 73.5 L786.8 74.5 L789.4 75.1 L792.0 75.0 L794.6 73.7 L797.2 74.8 L799.8 75.0 L802.4 74.1 L805.0 74.3 L807.6 73.5 L810.2 74.1 L812.8 74.2 L815.4 72.6 L818.0 74.3 L820.6 75.4 L823.2 75.0 L825.8 74.6 L828.4 73.6 L831.0 74.6 L833.6 74.1 L836.2 73.7 L838.8 74.9 L841.4 72.7 L844.0 74.7 L846.6 72.5 L849.2 74.2 L851.8 73.8 L854.4 73.1" stroke="#11921a" stroke-width="1" fill="none" stroke-linejoin="round" shape-rendering="crispEdges"/>
<path d="M0.0 16.3 L1.6 22.5 L7.0 67.0 L8.5 72.5 L9.8 70.5 L10.8 63.0 L13.1 60.2 L15.2 46.0 L17.7 29.0 L20.0 20.0 L21.3 16.2 L22.3 21.5 L23.3 26.2 L25.6 28.8 L29.0 49.0 L32.6 67.0 L34.1 73.7 L35.4 71.7 L36.4 63.0 L38.7 60.2 L40.7 46.0 L43.3 29.0 L45.6 20.0 L46.9 15.2 L47.9 21.5 L48.9 26.2 L51.2 28.8 L54.5 49.0 L58.1 67.0 L59.7 71.1 L60.9 69.1 L62.0 63.0 L64.3 60.2 L66.3 46.0 L68.9 29.0 L71.2 20.0 L72.4 15.3 L73.5 21.5 L74.5 26.2 L76.8 28.8 L80.1 49.0 L83.7 67.0 L85.2 73.0 L86.5 71.0 L87.5 63.0 L89.8 60.2 L91.9 46.0 L94.4 29.0 L96.7 20.0 L98.0 15.0 L99.0 21.5 L100.1 26.2 L102.4 28.8 L105.7 49.0 L109.3 67.0 L110.8 71.6 L112.1 69.6 L113.1 63.0 L115.4 60.2 L117.4 46.0 L120.0 29.0 L122.3 20.0 L123.6 16.9 L124.6 21.5 L125.6 26.2 L127.9 28.8 L131.3 49.0 L134.8 67.0 L136.4 72.9 L137.6 70.9 L138.7 63.0 L141.0 60.2 L143.0 46.0 L145.6 29.0 L147.9 20.0 L149.2 15.7 L150.2 21.5 L151.2 26.2 L153.5 28.8 L156.8 49.0 L160.4 67.0 L161.9 73.6 L163.2 71.6 L164.2 63.0 L166.5 60.2 L168.6 46.0 L171.1 29.0 L173.4 20.0 L174.7 15.4 L175.7 21.5 L176.8 26.2 L179.1 28.8 L182.4 49.0 L186.0 67.0 L187.5 73.0 L188.8 71.0 L189.8 63.0 L192.1 60.2 L194.2 46.0 L196.7 29.0 L199.0 20.0 L200.3 15.0 L201.3 21.5 L202.3 26.2 L204.6 28.8 L208.0 49.0 L211.5 67.0 L213.1 72.3 L214.4 70.3 L215.4 63.0 L217.7 60.2 L219.7 46.0 L222.3 29.0 L224.6 20.0 L225.9 16.7 L226.9 21.5 L227.9 26.2 L230.2 28.8 L233.5 49.0 L237.1 67.0 L238.6 73.7 L239.9 71.7 L240.9 63.0 L243.2 60.2 L245.3 46.0 L247.9 29.0 L250.2 20.0 L251.4 16.9 L252.5 21.5 L253.5 26.2 L255.8 28.8 L259.1 49.0 L262.7 67.0 L264.2 72.2 L265.5 70.2 L266.5 63.0 L268.8 60.2 L270.9 46.0 L273.4 29.0 L275.7 20.0 L277.0 16.1 L278.0 21.5 L279.0 26.2 L281.3 28.8 L284.7 49.0 L288.3 67.0 L289.8 72.0 L291.1 70.0 L292.1 63.0 L294.4 60.2 L296.4 46.0 L299.0 29.0 L301.3 20.0 L302.6 14.9 L303.6 21.5 L304.6 26.2 L306.9 28.8 L310.2 49.0 L313.8 67.0 L315.4 72.5 L316.6 70.5 L317.7 63.0 L320.0 60.2 L322.0 46.0 L324.6 29.0 L326.9 20.0 L328.1 16.8 L329.2 21.5 L330.2 26.2 L332.5 28.8 L335.8 49.0 L339.4 67.0 L340.9 73.5 L342.2 71.5 L343.2 63.0 L345.5 60.2 L347.6 46.0 L350.1 29.0 L352.4 20.0 L353.7 16.4 L354.7 21.5 L355.8 26.2 L358.1 28.8 L361.4 49.0 L365.0 67.0 L366.5 73.8 L367.8 71.8 L368.8 63.0 L371.1 60.2 L373.1 46.0 L375.7 29.0 L378.0 20.0 L379.3 15.2 L380.3 21.5 L381.3 26.2 L383.6 28.8 L387.0 49.0 L390.5 67.0 L392.1 71.6 L393.3 69.6 L394.4 63.0 L396.7 60.2 L398.7 46.0 L401.3 29.0 L403.6 20.0 L404.9 15.7 L405.9 21.5 L406.9 26.2 L409.2 28.8 L412.5 49.0 L416.1 67.0 L417.6 71.9 L418.9 69.9 L419.9 63.0 L422.2 60.2 L424.3 46.0 L426.8 29.0 L429.1 20.0 L430.4 15.1 L431.4 21.5 L432.5 26.2 L434.8 28.8 L438.1 49.0 L441.7 67.0 L443.2 72.3 L444.5 70.3 L445.5 63.0 L447.8 60.2 L449.9 46.0 L452.4 29.0 L454.7 20.0 L456.0 16.2 L457.0 21.5 L458.0 26.2 L460.3 28.8 L463.7 49.0 L467.2 67.0 L468.8 72.5 L470.1 70.5 L471.1 63.0 L473.4 60.2 L475.4 46.0 L478.0 29.0 L480.3 20.0 L481.6 15.4 L482.6 21.5 L483.6 26.2 L485.9 28.8 L489.2 49.0 L492.8 67.0 L494.3 73.4 L495.6 71.4 L496.6 63.0 L498.9 60.2 L501.0 46.0 L503.6 29.0 L505.9 20.0 L507.1 17.2 L508.2 21.5 L509.2 26.2 L511.5 28.8 L514.8 49.0 L518.4 67.0 L519.9 72.4 L521.2 70.4 L522.2 63.0 L524.5 60.2 L526.6 46.0 L529.1 29.0 L531.4 20.0 L532.7 14.7 L533.7 21.5 L534.7 26.2 L537.0 28.8 L540.4 49.0 L544.0 67.0 L545.5 71.2 L546.8 69.2 L547.8 63.0 L550.1 60.2 L552.1 46.0 L554.7 29.0 L557.0 20.0 L558.3 16.9 L559.3 21.5 L560.3 26.2 L562.6 28.8 L565.9 49.0 L569.5 67.0 L571.1 71.2 L572.3 69.2 L573.4 63.0 L575.7 60.2 L577.7 46.0 L580.3 29.0 L582.6 20.0 L583.8 16.4 L584.9 21.5 L585.9 26.2 L588.2 28.8 L591.5 49.0 L595.1 67.0 L596.6 72.7 L597.9 70.7 L598.9 63.0 L601.2 60.2 L603.3 46.0 L605.8 29.0 L608.1 20.0 L609.4 15.3 L610.4 21.5 L611.5 26.2 L613.8 28.8 L617.1 49.0 L620.7 67.0 L622.2 73.3 L623.5 71.3 L624.5 63.0 L626.8 60.2 L628.8 46.0 L631.4 29.0 L633.7 20.0 L635.0 14.6 L636.0 21.5 L637.0 26.2 L639.3 28.8 L642.7 49.0 L646.2 67.0 L647.8 71.5 L649.0 69.5 L650.1 63.0 L652.4 60.2 L654.4 46.0 L657.0 29.0 L659.3 20.0 L660.6 15.7 L661.6 21.5 L662.6 26.2 L664.9 28.8 L668.2 49.0 L671.8 67.0 L673.3 71.2 L674.6 69.2 L675.6 63.0 L677.9 60.2 L680.0 46.0 L682.5 29.0 L684.8 20.0 L686.1 16.7 L687.1 21.5 L688.2 26.2 L690.5 28.8 L693.8 49.0 L697.4 67.0 L698.9 71.8 L700.2 69.8 L701.2 63.0 L703.5 60.2 L705.6 46.0 L708.1 29.0 L710.4 20.0 L711.7 14.9 L712.7 21.5 L713.7 26.2 L716.0 28.8 L719.4 49.0 L722.9 67.0 L724.5 71.2 L725.8 69.2 L726.8 63.0 L729.1 60.2 L731.1 46.0 L733.7 29.0 L736.0 20.0 L737.3 16.2 L738.3 21.5 L739.3 26.2 L741.6 28.8 L744.9 49.0 L748.5 67.0 L750.0 72.4 L751.3 70.4 L752.3 63.0 L754.6 60.2 L756.7 46.0 L759.3 29.0 L761.6 20.0 L762.8 16.2 L763.9 21.5 L764.9 26.2 L767.2 28.8 L770.5 49.0 L774.1 67.0 L775.6 72.9 L776.9 70.9 L777.9 63.0 L780.2 60.2 L782.3 46.0 L784.8 29.0 L787.1 20.0 L788.4 16.7 L789.4 21.5 L790.4 26.2 L792.7 28.8 L796.1 49.0 L799.7 67.0 L801.2 73.8 L802.5 71.8 L803.5 63.0 L805.8 60.2 L807.8 46.0 L810.4 29.0 L812.7 20.0 L814.0 16.3 L815.0 21.5 L816.0 26.2 L818.3 28.8 L821.6 49.0 L825.2 67.0 L826.8 71.7 L828.0 69.7 L829.1 63.0 L831.4 60.2 L833.4 46.0 L836.0 29.0 L838.4 15.5 L841.8 25.0 L845.5 17.5 L849.0 18.0 L852.5 23.0 L856.0 17.5" stroke="#ffff1a" stroke-width="1" fill="none" stroke-linejoin="round" shape-rendering="crispEdges"/>
<path d="M18.0 100.0 L24.0 90.0 L420.0 90.0 L426.0 100.0 L420.0 110.0 L24.0 110.0 Z" fill="#800080"/><text x="220.5" y="103.4" fill="#fff" font-size="9" text-anchor="middle" font-family="Liberation Sans, sans-serif">SYNC</text>
<path d="M426.0 100.0 L432.0 90.0 L523.0 90.0 L529.0 100.0 L523.0 110.0 L432.0 110.0 Z" fill="#ffff00"/><text x="476.0" y="103.4" fill="#000" font-size="9" text-anchor="middle" font-family="Liberation Sans, sans-serif">OUT</text>
<path d="M529.0 100.0 L535.0 90.0 L612.0 90.0 L618.0 100.0 L612.0 110.0 L535.0 110.0 Z" fill="#ff0000"/><text x="572.0" y="103.4" fill="#fff" font-size="9" text-anchor="middle" font-family="Liberation Sans, sans-serif">h2</text>
<path d="M618.0 100.0 L624.0 90.0 L663.0 90.0 L669.0 100.0 L663.0 110.0 L624.0 110.0 Z" fill="#0000ff"/><text x="642.0" y="103.4" fill="#fff" font-size="9" text-anchor="middle" font-family="Liberation Sans, sans-serif">h2</text>
<path d="M669.0 100.0 L675.0 90.0 L727.0 90.0 L733.0 100.0 L727.0 110.0 L675.0 110.0 Z" fill="#808080"/><text x="699.0" y="103.4" fill="#fff" font-size="9" text-anchor="middle" font-family="Liberation Sans, sans-serif">h10</text>
</svg>
</div>
<div class="lab" style="left:21px;top:182px">1.06V</div>
<div class="lab" style="left:20px;top:243px">-8.17 mV</div>
<div class="lab" style="left:75px;top:310px">-2.7191 µS</div>
<div class="lab" style="left:225px;top:310px">-2.6911 µS</div>
<div class="lab" style="left:405px;top:310px">-2.6631 µS</div>
<div class="lab" style="left:585px;top:310px">-2.6350 µS</div>
<div class="lab" style="left:747px;top:310px">-2.6070 µS</div>
<div class="lab" style="left:889px;top:310px">-2.5790 µS</div>

<!-- toolbar -->
<div class="tb" style="top:143px;background:#3f6fd2;border:1px solid #fff">
<svg width="28" height="19" viewBox="0 0 28 19"><defs><linearGradient id="cb" x1="0" y1="0" x2="1" y2="0"><stop offset="0" stop-color="#5c5c5c"/><stop offset="0.25" stop-color="#8a8a8a"/><stop offset="0.5" stop-color="#c4c4c4"/><stop offset="1" stop-color="#8c8c8c"/></linearGradient></defs><rect x="0" y="0" width="28" height="19" fill="#3f72d6"/><rect x="11" y="0.5" width="8" height="3.5" fill="#f4a41c"/><path d="M1 7 Q1 4 4.5 4 H8 L9.5 2.5 H20 L21.5 4 H24 Q27 4 27 7 V19 H1 Z" fill="url(#cb)"/><path d="M1 7 Q1 4 4.5 4 H7 V19 H1 Z" fill="#666"/><rect x="9.5" y="3" width="11" height="3" fill="#dedede"/><ellipse cx="17.5" cy="13" rx="7.2" ry="6.6" fill="#ececec"/><ellipse cx="17.5" cy="13.6" rx="5.6" ry="5" fill="#303030"/><ellipse cx="17.5" cy="16" rx="4" ry="3" fill="#2c5fe0"/><ellipse cx="17.5" cy="10.6" rx="3.8" ry="1.7" fill="#f6f6f6"/></svg></div>
<div class="tb" style="top:168px;border:1px solid #f2f5fc">
<svg width="28" height="19" viewBox="0 0 28 19"><rect x="10" y="3" width="13" height="10" fill="#f4f7fd" stroke="#8a9cc8" stroke-width="1"/><rect x="10" y="3" width="13" height="2.5" fill="#7b98dc"/><path d="M13 8 H21 M13 10.5 H19" stroke="#b8c4d8" stroke-width="1"/><circle cx="8.5" cy="8.5" r="4" fill="#dff0fa" stroke="#7f8fb4" stroke-width="1.3"/><path d="M11.5 11.5 L15 15" stroke="#d9a520" stroke-width="2.6" stroke-linecap="round"/></svg></div>
<div class="tb" style="top:193px;border:1px solid #f2f5fc;background:linear-gradient(#d3def6,#b9caef)">
<svg width="28" height="19" viewBox="0 0 28 19"><path d="M10 8.8 H15 Q18.6 8.8 18.6 11.8 Q18.6 14.4 15 15" fill="none" stroke="#4a7ada" stroke-width="2.3"/><path d="M6.5 8.8 L11.5 5 V12.6 Z" fill="#4a7ada"/></svg></div>
<div class="tb" style="top:218px;border:1px solid #f2f5fc">
<svg width="28" height="19" viewBox="0 0 28 19"><rect x="7.5" y="5.5" width="13" height="8" fill="#c8d6f4" stroke="#4a5a8a" stroke-width="1"/><path d="M14 1 V18 M3 9.5 H25" stroke="#222" stroke-width="1.2"/><path d="M14 0 L11.5 3.5 H16.5 Z M14 19 L11.5 15.5 H16.5 Z M1.5 9.5 L5 7 V12 Z M26.5 9.5 L23 7 V12 Z" fill="#111"/><rect x="10" y="7.5" width="8" height="4" fill="#d8e2f8"/></svg></div>
<div class="tb" style="top:243px;border:1px solid #f4f6fc;background:#8c9fdb">
<svg width="28" height="19" viewBox="0 0 28 19"><path d="M7.5 10 Q4 7.6 5 6.4 Q6.4 5.6 9 8 L7.4 4.2 Q8 2.8 9.6 3.6 L11.6 7 L11 2.6 Q12 1.2 13.4 2.4 L14.4 6.6 L15 2.4 Q16.4 1.4 17.4 2.8 L17.2 7.2 L19.4 4.4 Q21 4 21.2 5.6 L19.4 10.6 Q19 13.6 17.4 14.8 V17 H10.6 V14.8 Q8.6 13 7.5 10 Z" fill="#fff" stroke="#2b2b2b" stroke-width="0.8" stroke-linejoin="round"/><rect x="10.4" y="14.8" width="7.2" height="2.4" fill="#1c1c1c"/></svg></div>
<div class="tb" style="top:268px;background:#ccd8f2;border:1px solid #e4eaf8;border-right:2px solid #86a2e2;border-bottom:2px solid #86a2e2">
<svg width="27" height="18" viewBox="0 0 27 18"><rect x="8" y="2.5" width="1.6" height="15" fill="#e01818"/><rect x="14" y="1" width="1.6" height="14" fill="#e01818"/></svg></div>
<div class="tb" style="top:293px;background:#ccd8f2;border:1px solid #e4eaf8;border-right:2px solid #86a2e2;border-bottom:2px solid #86a2e2">
<svg width="27" height="18" viewBox="0 0 27 18"><rect x="2" y="5.5" width="19" height="1.4" fill="#e01818"/><rect x="3.5" y="10" width="19" height="1.6" fill="#e8506a"/></svg></div>
<svg class="abs" style="left:951px;top:316px" width="34" height="22" viewBox="0 0 34 22"><path d="M2 9 L11 2.5 L20 8 L12 15 L6 13.6 Z" fill="#f4f4f4" stroke="#d4d4d4" stroke-width="0.5"/><path d="M11 2.5 L20 8 L16.5 11 Z" fill="#d0d0d0"/><rect x="16" y="7.8" width="7" height="3.6" fill="#e8121c"/><rect x="24" y="7.8" width="7" height="3.6" fill="#7cb820"/><rect x="16" y="12" width="7" height="3.4" fill="#ffee00"/><rect x="24" y="12" width="7" height="3.4" fill="#12a0e0"/><rect x="16" y="16" width="7" height="3.2" fill="#1a1f8c"/><rect x="24" y="16" width="7" height="3.2" fill="#f08018"/></svg>


<!-- data row -->
<div class="abs" style="left:33px;top:364px;font-size:12px;font-weight:bold;color:#080818;letter-spacing:-0.2px">Data</div>
<div class="abs" style="left:75px;top:342px;width:591px;height:53px;background:#e6e6fa;border:1px solid #7a7a7a;box-shadow:inset 0 0 0 1px #fff"></div>
<div class="abs" style="left:647px;top:344px;width:1px;height:49px;background:#fff"></div>
<div class="abs" style="left:648px;top:344px;width:16px;height:49px;background:#f1f1f1"></div>
<svg class="abs" style="left:648px;top:344px" width="16" height="49" viewBox="0 0 16 49"><path d="M4 12 L7.5 8 L11 12 M4 38 L7.5 42 L11 38" fill="none" stroke="#aab2b2" stroke-width="1.7"/></svg>
<div class="abs" style="left:669px;top:342px;width:322px;height:53px;border:1px solid #ece9e0"></div>
<div class="abs" style="left:673px;top:345px;width:313px;height:17px;background:#b0c4de"></div>
<div class="lab" style="left:803px;top:347px;color:#10101c">Annotation</div>
<div class="ann" style="left:677px;top:365px;color:#96008e">SYNC</div>
<div class="ann" style="left:726.5px;top:366px;color:#ffff00">PID</div>
<div class="ann" style="left:813.5px;top:366px;color:#b02a40">DATA</div>
<div class="ann" style="left:886px;top:366px;color:#1212f4">ENDP</div>
<div class="ann" style="left:677px;top:380px;color:#808080">CRC</div>
<div class="ann" style="left:727.5px;top:380px;color:#ff1010">ADDRESS</div>
<div class="ann" style="left:815.5px;top:380px;color:#088408">FRAME</div>
<div class="ann" style="left:878px;top:379px;color:#7fe8a0">-</div>


<!-- bottom app -->
<div class="abs" style="left:5px;top:400px;width:1012px;height:297px;border:1px solid #fff;border-top:2px solid #b9bedb"></div>
<div class="abs" style="left:6px;top:402px;width:910px;height:294px;background:#3c4888;border-radius:0 11px 11px 0"></div>
<div class="abs" style="left:11px;top:406px;width:900px;height:21px;background:linear-gradient(to right,#bccaec,#a3b4e0 60%,#9aacdc);border-radius:6px 8px 0 0"></div>
<div class="abs" style="left:11px;top:426px;width:900px;height:3px;background:linear-gradient(#e4eaf8 0,#fff 1px)"></div>
<div class="abs" style="left:11px;top:429px;width:99px;height:241px;background:#5060a8"></div>
<div class="abs" style="left:110px;top:429px;width:801px;height:241px;background:#7b96d3"></div>
<div class="abs" style="left:110px;top:429px;width:3px;height:241px;background:linear-gradient(to right,#7a8ed0 0,#7a8ed0 1px,#a8c0f4 1px)"></div>
<div class="abs" style="left:11px;top:670px;width:900px;height:22px;background:linear-gradient(to right,#b3c1e8,#a0b1df);border-top:2px solid #fff;border-radius:0 0 8px 6px"></div>
<div class="abs" style="left:17px;top:676px;font-size:13px;color:#111;white-space:nowrap">Version :1.0.2</div>
<div class="abs" style="left:106px;top:677px;font-size:11px;font-weight:bold;color:#111;white-space:nowrap;letter-spacing:.2px">Decode complete... (Analyzed 312532 data samples and 35 HSIC Packets were found)</div>
<svg class="abs" style="left:16px;top:410px" width="25" height="14" viewBox="0 0 25 14"><path d="M1 7 L5.5 1.6 L9 3.4 L12 1.6 L15 3.2 L18.5 1.6 L23.2 6.6 L17.5 12.6 L14.5 11.4 L11.5 12.8 L8.5 11.4 L5.5 12.8 Z" fill="#1a9ff0"/><path d="M1 7.4 L4 7 L8 9.6 L11 8.4 L14.5 10 L18 8.6 L23.2 6.6 L17.5 12.8 L14.5 11.4 L11.5 13 L8.5 11.4 L5.5 13 Z" fill="#ff9a1a"/><path d="M7 5.2 Q8.5 3.2 10.2 5 Q11 7 9 7.2 M15 5.4 Q16.5 3.4 18.6 5" fill="none" stroke="#ff9a1a" stroke-width="1.1"/><circle cx="18" cy="6.3" r="1" fill="#fff"/><circle cx="11.8" cy="10.3" r="0.9" fill="#2a7fd0"/><circle cx="5" cy="10.2" r="0.8" fill="#2a7fd0"/></svg>
<div class="abs" style="left:48px;top:411px;font-size:12px;font-weight:bold;color:#101020;white-space:nowrap;letter-spacing:-0.16px">Prodigy Technovations&nbsp; - HSIC Protocol Decode Software</div>
<div class="abs" style="left:854px;top:410px;font-size:11.5px;font-weight:bold;color:#0000ff;text-decoration:underline">About</div>
<div class="abs" style="left:113px;top:430px;width:688px;height:240px;background:#000"></div>
<div class="abs" style="left:114px;top:431px;width:686px;height:239px;background:#fff;overflow:hidden">
<div class="th" style="left:0px;width:90px;line-height:40px;padding-left:9px">Time Stamp</div>
<div class="th" style="left:90px;width:60px;padding-top:5px;line-height:15px">PID /<br>BUS</div>
<div class="th" style="left:150px;width:67px;padding-top:5px;line-height:15px">Frame<br>Number</div>
<div class="th" style="left:217px;width:68px;line-height:40px">Address</div>
<div class="th" style="left:285px;width:72px;line-height:40px">EndPoint</div>
<div class="th" style="left:357px;width:156px;line-height:40px">Data</div>
<div class="th" style="left:513px;width:68px;line-height:40px">CRC</div>
<div class="th" style="left:581px;width:88px;line-height:40px">Error Type</div>
<div class="tr" style="top:38px;background:#fff">
<div class="td" style="left:0px;width:90px;color:#000;padding-left:4.5px">-7.0407 µS</div>
<div class="td" style="left:90px;width:60px;color:#0a7a0a;letter-spacing:-0.65px">IDLE</div>
<div class="td" style="left:150px;width:67px;color:#000">-</div>
<div class="td" style="left:217px;width:68px;color:#000">-</div>
<div class="td" style="left:285px;width:72px;color:#000">-</div>
<div class="td" style="left:357px;width:156px;color:#000">-</div>
<div class="td" style="left:513px;width:68px;color:#000">-</div>
<div class="td" style="left:581px;width:88px;color:#ff0000">-</div>
</div>
<div class="tr" style="top:58px;background:#ffffe1">
<div class="td" style="left:0px;width:90px;color:#000;padding-left:4.5px">-6.7791 µS</div>
<div class="td" style="left:90px;width:60px;color:#000;letter-spacing:-0.65px">UNKNO...</div>
<div class="td" style="left:150px;width:67px;color:#000">-</div>
<div class="td" style="left:217px;width:68px;color:#000">-</div>
<div class="td" style="left:285px;width:72px;color:#000">-</div>
<div class="td" style="left:357px;width:156px;color:#000">-</div>
<div class="td" style="left:513px;width:68px;color:#000">-</div>
<div class="td" style="left:581px;width:88px;color:#ff0000">Out of sync</div>
</div>
<div class="tr" style="top:78px;background:#fff">
<div class="td" style="left:0px;width:90px;color:#000;padding-left:4.5px">-3.6040 µS</div>
<div class="td" style="left:90px;width:60px;color:#0a7a0a;letter-spacing:-0.65px">IDLE</div>
<div class="td" style="left:150px;width:67px;color:#000">-</div>
<div class="td" style="left:217px;width:68px;color:#000">-</div>
<div class="td" style="left:285px;width:72px;color:#000">-</div>
<div class="td" style="left:357px;width:156px;color:#000">-</div>
<div class="td" style="left:513px;width:68px;color:#000">-</div>
<div class="td" style="left:581px;width:88px;color:#ff0000">-</div>
</div>
<div class="tr" style="top:98px;background:#ffffe1">
<div class="td" style="left:0px;width:90px;color:#000;padding-left:4.5px">-3.3313 µS</div>
<div class="td" style="left:90px;width:60px;color:#0a7a0a;letter-spacing:-0.65px">IDLE</div>
<div class="td" style="left:150px;width:67px;color:#000">-</div>
<div class="td" style="left:217px;width:68px;color:#000">-</div>
<div class="td" style="left:285px;width:72px;color:#000">-</div>
<div class="td" style="left:357px;width:156px;color:#000">-</div>
<div class="td" style="left:513px;width:68px;color:#000">-</div>
<div class="td" style="left:581px;width:88px;color:#ff0000">-</div>
</div>
<div class="tr" style="top:118px;background:#0078d7">
<div class="td" style="left:0px;width:90px;color:#fff;border-color:#0078d7;padding-left:4.5px">-2.7165 µS</div>
<div class="td" style="left:90px;width:60px;color:#fff;border-color:#0078d7;letter-spacing:-0.65px">OUT</div>
<div class="td" style="left:150px;width:67px;color:#fff;border-color:#0078d7">-</div>
<div class="td" style="left:217px;width:68px;color:#fff;border-color:#0078d7">h2</div>
<div class="td" style="left:285px;width:72px;color:#fff;border-color:#0078d7">h2</div>
<div class="td" style="left:357px;width:156px;color:#fff;border-color:#0078d7">-</div>
<div class="td" style="left:513px;width:68px;color:#fff;border-color:#0078d7">h10</div>
<div class="td" style="left:581px;width:88px;color:#fff;border-color:#0078d7"></div>
</div>
<div class="tr" style="top:138px;background:#ffffe1">
<div class="td" style="left:0px;width:90px;color:#000;padding-left:4.5px">-2.5831 µS</div>
<div class="td" style="left:90px;width:60px;color:#0a7a0a;letter-spacing:-0.65px">IDLE</div>
<div class="td" style="left:150px;width:67px;color:#000">-</div>
<div class="td" style="left:217px;width:68px;color:#000">-</div>
<div class="td" style="left:285px;width:72px;color:#000">-</div>
<div class="td" style="left:357px;width:156px;color:#000">-</div>
<div class="td" style="left:513px;width:68px;color:#000">-</div>
<div class="td" style="left:581px;width:88px;color:#ff0000">-</div>
</div>
<div class="tr" style="top:158px;background:#fff">
<div class="td" style="left:0px;width:90px;color:#000;padding-left:4.5px">-2.4165 µS</div>
<div class="td" style="left:90px;width:60px;color:#000;letter-spacing:-0.65px">DATA1</div>
<div class="td" style="left:150px;width:67px;color:#000">-</div>
<div class="td" style="left:217px;width:68px;color:#000">-</div>
<div class="td" style="left:285px;width:72px;color:#000">-</div>
<div class="td" style="left:357px;width:156px;color:#000">h00, 00, 00, 00, 0F, 41, D...</div>
<div class="td" style="left:513px;width:68px;color:#000">hE183</div>
<div class="td" style="left:581px;width:88px;color:#ff0000"></div>
</div>
<div class="tr" style="top:178px;background:#ffffe1">
<div class="td" style="left:0px;width:90px;color:#000;padding-left:4.5px">6.2501 µS</div>
<div class="td" style="left:90px;width:60px;color:#0a7a0a;letter-spacing:-0.65px">IDLE</div>
<div class="td" style="left:150px;width:67px;color:#000">-</div>
<div class="td" style="left:217px;width:68px;color:#000">-</div>
<div class="td" style="left:285px;width:72px;color:#000">-</div>
<div class="td" style="left:357px;width:156px;color:#000">-</div>
<div class="td" style="left:513px;width:68px;color:#000">-</div>
<div class="td" style="left:581px;width:88px;color:#ff0000">-</div>
</div>
<div class="tr" style="top:198px;background:#fff">
<div class="td" style="left:0px;width:90px;color:#000;padding-left:4.5px">6.5383 µS</div>
<div class="td" style="left:90px;width:60px;color:#0a7a0a;letter-spacing:-0.65px">CONNE...</div>
<div class="td" style="left:150px;width:67px;color:#000">-</div>
<div class="td" style="left:217px;width:68px;color:#000">-</div>
<div class="td" style="left:285px;width:72px;color:#000">-</div>
<div class="td" style="left:357px;width:156px;color:#000">-</div>
<div class="td" style="left:513px;width:68px;color:#000">-</div>
<div class="td" style="left:581px;width:88px;color:#ff0000">-</div>
</div>
<div class="tr" style="top:218px;background:#ffffe1">
<div class="td" style="left:0px;width:90px;color:#000;padding-left:4.5px">12.950 µS</div>
<div class="td" style="left:90px;width:60px;color:#000;letter-spacing:-0.65px">OUT</div>
<div class="td" style="left:150px;width:67px;color:#000">-</div>
<div class="td" style="left:217px;width:68px;color:#000">h2</div>
<div class="td" style="left:285px;width:72px;color:#000">h2</div>
<div class="td" style="left:357px;width:156px;color:#000">-</div>
<div class="td" style="left:513px;width:68px;color:#000">h10</div>
<div class="td" style="left:581px;width:88px;color:#ff0000"></div>
</div>
<div class="abs" style="left:669px;top:0;width:17px;height:239px;background:#fff"></div>
<div class="abs" style="left:670px;top:1px;width:16px;height:238px;background:#f0f0f0"></div>
<div class="abs" style="left:670px;top:17px;width:15px;height:60px;background:#c1c1c1"></div>
<svg class="abs" style="left:669px;top:0" width="17" height="239" viewBox="0 0 17 239"><path d="M5 11.3 L8.5 7.3 L12 11.3" fill="none" stroke="#505050" stroke-width="2"/><path d="M5 232.2 L8.5 236.2 L12 232.2" fill="none" stroke="#505050" stroke-width="2"/></svg>
</div>
<div class="abs" style="left:804px;top:444px;width:1px;height:225px;background:#f4ece8"></div>
<div class="pill blue" style="left:21px;top:509px;width:86px;height:26px;font-size:13px;padding-bottom:2px;padding-right:7px">Configure</div>
<div class="pill gray" style="left:21px;top:568px;width:86px;height:26px;font-size:13px;color:#6e6e6e;padding-bottom:2px;padding-right:5px">Trigger</div>
<div class="pill green" style="left:813px;top:433px;width:91px;height:34px;font-size:11px;letter-spacing:.25px;padding-right:2px">Detail View</div>
<div class="pill green" style="left:813px;top:476.5px;width:91px;height:34px;font-size:11px;letter-spacing:.25px;padding-right:2px">Bus States</div>
<div class="abs" style="left:816px;top:517px;font-size:11px;font-weight:bold;color:#101020;letter-spacing:.1px">Data Format</div>
<div class="abs" style="left:811px;top:537px;width:93px;height:23px;background:#e4e4e4;border:1px solid #b8b0a8;color:#000;font-size:12px;font-weight:bold;line-height:21px;padding-left:4px">Hex</div>
<svg class="abs" style="left:890px;top:545px" width="10" height="7" viewBox="0 0 10 7"><path d="M1 1.5 L5 5.5 L9 1.5" fill="none" stroke="#444" stroke-width="1.1"/></svg>
<div class="abs" style="left:824px;top:577px;font-size:12px;font-weight:bold;color:#101020;white-space:nowrap;letter-spacing:-0.25px">Runs :</div>
<div class="abs" style="left:878px;top:577px;font-size:12px;font-weight:bold;color:#101020">1</div>
<div class="pill green" style="left:813px;top:602.5px;width:91px;height:30.5px;font-size:11px;letter-spacing:.25px;padding-bottom:2px">Search</div>
<div class="abs" style="left:812px;top:642px;width:92px;height:28px;overflow:hidden"><div class="pill green" style="left:0;top:0.5px;width:92px;height:31px;font-size:11px;letter-spacing:.3px;padding-bottom:2px;padding-right:2px">Filter</div></div>
<div class="abs" style="left:916px;top:434px;width:98px;height:124px;background:#a9baE6"></div>
<div class="abs" style="left:916px;top:438px;width:102px;text-align:center;font-size:11px;font-weight:bold;color:#101020;letter-spacing:-0.2px">Run</div>
<div class="pill green" style="left:924px;top:457px;width:86px;height:26px;font-size:13px;padding-bottom:2px">Single</div>
<div class="pill green" style="left:924px;top:490px;width:86px;height:26px;font-size:13px;padding-bottom:2px">Repetitive</div>
<div class="pill green" style="left:924px;top:523px;width:86px;height:26px;font-size:13px;padding-bottom:2px">No Acq</div>
<div class="abs" style="left:910px;top:567px;width:100px;height:34px;background:linear-gradient(to right,#8fa6dc 0,#a9bbe8 5px);border-radius:0 6px 6px 0"></div>
<svg class="abs" style="left:906px;top:552px" width="22" height="64" viewBox="906 552 22 64">
<rect x="910" y="559" width="6" height="50" fill="#9db0e2"/>
<rect x="910" y="559" width="2.5" height="50" fill="#8aa2da"/>
<path d="M911 552 L916 552 L916 558 Q916 566 925 566.6 L925 567.2 L919 567.2 Q911 567 911 559 Z" fill="#3c4888"/>
<path d="M911 616 L916 616 L916 610 Q916 602 925 601.4 L925 600.8 L919 600.8 Q911 601 911 609 Z" fill="#3c4888"/>
</svg>
<div class="pill orange" style="left:918px;top:571.5px;width:85px;height:25px;font-size:13px;padding-bottom:3px;padding-right:3px">Result</div>
<div class="pill blue" style="left:918px;top:611px;width:86px;height:26px;font-size:13px;padding-bottom:3px;padding-right:2px">Export</div>
<div class="pill blue" style="left:918px;top:651px;width:86px;height:26px;font-size:13px;padding-bottom:3px;padding-right:2px">Report</div>
<svg class="abs" style="left:934px;top:403px" width="82" height="26" viewBox="0 0 82 26">
<defs>
<radialGradient id="gb" cx="50%" cy="25%" r="75%"><stop offset="0" stop-color="#7fc0ff"/><stop offset="0.55" stop-color="#2f86ea"/><stop offset="1" stop-color="#1f6cd4"/></radialGradient>
<linearGradient id="gm" x1="0" y1="0" x2="0" y2="1"><stop offset="0" stop-color="#8cc4e0"/><stop offset="0.5" stop-color="#4f9cc6"/><stop offset="1" stop-color="#2f86b4"/></linearGradient>
<linearGradient id="go" x1="0" y1="0" x2="0" y2="1"><stop offset="0" stop-color="#ffc040"/><stop offset="0.5" stop-color="#f6a21a"/><stop offset="1" stop-color="#d4880c"/></linearGradient>
</defs>
<ellipse cx="13.5" cy="13" rx="10.8" ry="10.2" fill="url(#gb)"/>
<text x="13.4" y="19" text-anchor="middle" font-family="Liberation Sans, sans-serif" font-weight="bold" font-size="16.5" fill="#fff" stroke="#fff" stroke-width="0.5">?</text>
<circle cx="43.5" cy="12.8" r="10.4" fill="url(#gm)" stroke="#2b4a70" stroke-width="1.2"/>
<rect x="38" y="11.6" width="11.2" height="2.2" rx="1" fill="#18344f"/>
<circle cx="67.6" cy="12.8" r="10.4" fill="url(#go)" stroke="#7a5a20" stroke-width="1.2"/>
<path d="M62.6 7.6 L72.8 18.2 M72.8 7.6 L62.6 18.2" stroke="#3a2810" stroke-width="2.1" stroke-linecap="round"/>
</svg>
</body>
</html>
